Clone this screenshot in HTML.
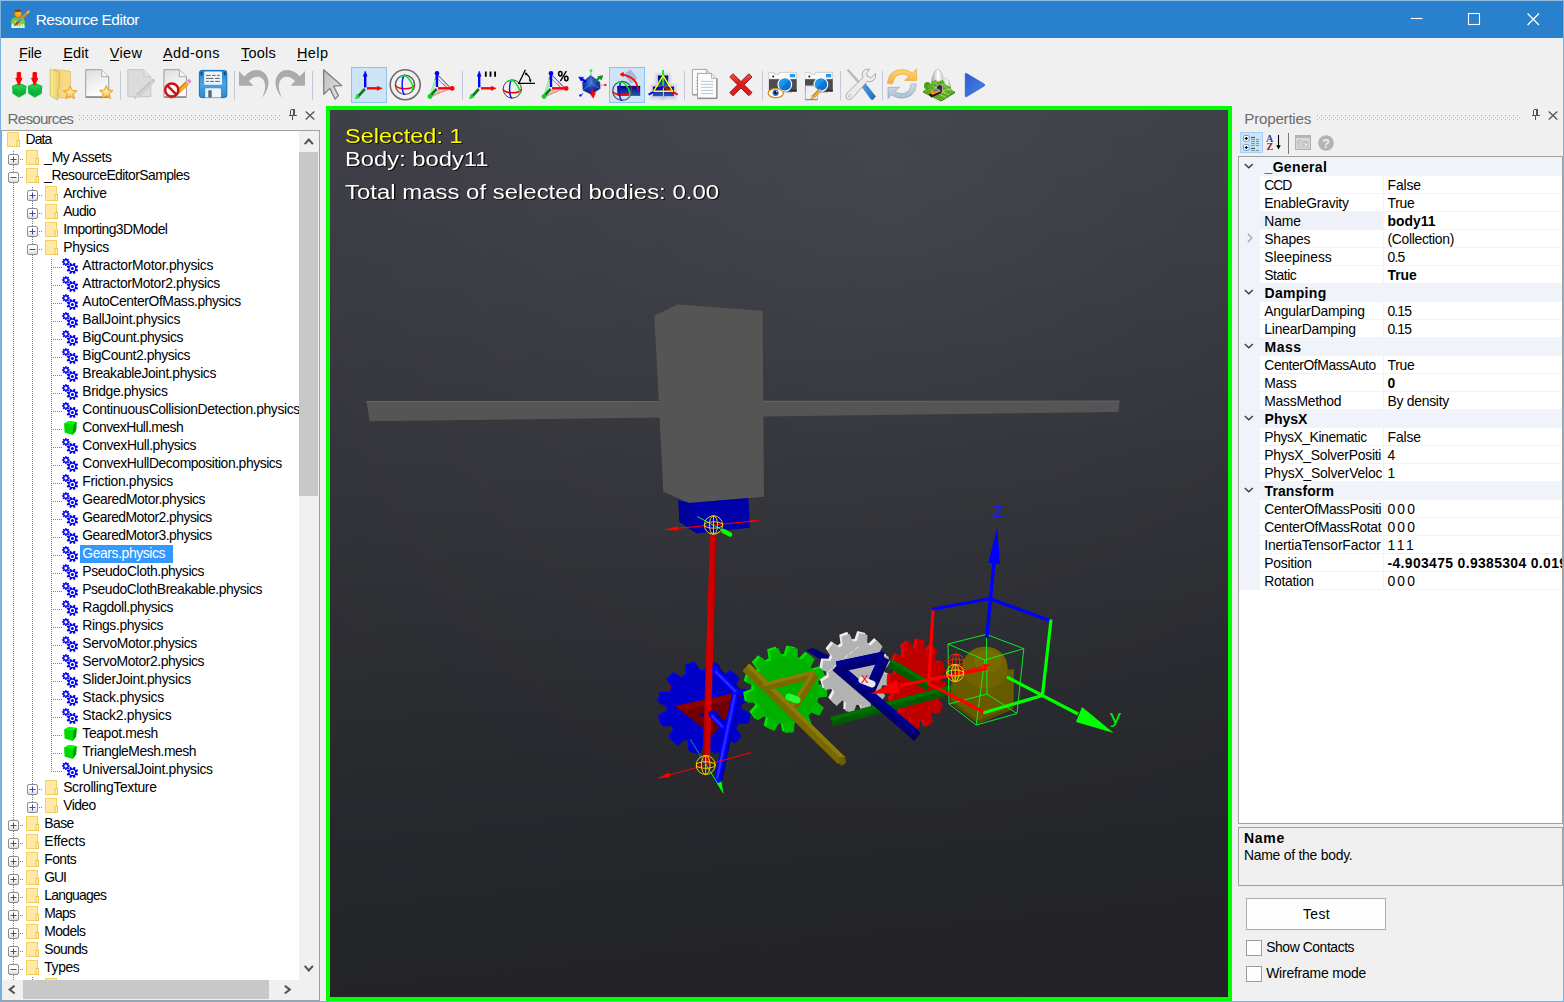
<!DOCTYPE html>
<html><head><meta charset="utf-8"><title>Resource Editor</title>
<style>
html,body{margin:0;padding:0}
body{width:1564px;height:1002px;overflow:hidden;position:relative;background:#f0f0f0;font-family:"Liberation Sans",sans-serif;}
.t{position:absolute;white-space:pre;line-height:1;font-family:"Liberation Sans",sans-serif;}
.a{position:absolute}
svg{position:absolute;overflow:visible}

</style></head>
<body>
<div class="a" style="left:0;top:0;width:1564px;height:1002px;box-sizing:border-box;border:1px solid #7db2de;border-top-color:#8fbde3"></div>
<div class="a" style="left:1px;top:1px;width:1562px;height:37px;background:#2981cd"></div>
<svg style="left:10px;top:8px" width="22" height="22" viewBox="0 0 22 22">
<defs><radialGradient id="hd" cx=".55" cy=".55" r=".6"><stop offset="0" stop-color="#ffc44a"/><stop offset=".6" stop-color="#f39a0c"/><stop offset="1" stop-color="#c66f00"/></radialGradient>
<linearGradient id="bd" x1="0" y1="0" x2="0" y2="1"><stop offset="0" stop-color="#6cc63a"/><stop offset=".55" stop-color="#7fd048"/><stop offset="1" stop-color="#e9f3e0"/></linearGradient></defs>
<path d="M1.2 20 L1.2 13.5 Q1.2 9.6 5 9.6 L11 9.6 Q14.8 9.6 14.8 13.5 L14.8 20 Z" fill="url(#bd)"/>
<path d="M2 20 V15.5 H3.3 V20 M5.2 20 V13 H6.6 V20 M11 20 V16.5 H12 V20 M13 20 V16 H14 V20" fill="#fff" opacity=".8"/>
<ellipse cx="8" cy="5.4" rx="3.9" ry="3.7" fill="url(#hd)"/>
<path d="M4.2 4.6 Q5 1.4 8.2 1.6 Q11.5 1.8 11.8 4.4 Q9.5 2.8 7.5 4 Q6 3 4.2 4.6Z" fill="#7a3e04"/>
<path d="M18.6 3.6 L10.6 11.2" stroke="#c99334" stroke-width="2.3" stroke-linecap="round"/>
<path d="M18.8 3.2 L17.2 4.8" stroke="#e8c47a" stroke-width="1.4" stroke-linecap="round"/>
<path d="M10.6 11.2 L7.6 14.4" stroke="#4f8fd6" stroke-width="2.4" stroke-linecap="butt"/>
<path d="M7.6 14.6 L5.6 16.6" stroke="#9a5a1e" stroke-width="2.4" stroke-linecap="round"/>
</svg>
<span class="t" style="left:35.7px;top:11px;line-height:17px;font-size:15.4px;color:#fff;letter-spacing:-0.475px;">Resource Editor</span>
<svg style="left:1400px;top:0" width="160" height="38" viewBox="0 0 160 38">
<path d="M10.8 18.5 H22.6" stroke="#fff" stroke-width="1.1" fill="none"/>
<rect x="68.5" y="13.5" width="11" height="11" stroke="#fff" stroke-width="1.1" fill="none"/>
<path d="M127.6 13.5 L139 25 M139 13.5 L127.6 25" stroke="#fff" stroke-width="1.2" fill="none"/>
</svg>
<span class="t" style="left:19px;top:45px;line-height:16px;font-size:14.5px;color:#000;letter-spacing:-0.191px;">File</span>
<div class="a" style="left:19px;top:60px;width:7.7px;height:1px;background:#000"></div>
<span class="t" style="left:63.2px;top:45px;line-height:16px;font-size:14.5px;color:#000;letter-spacing:0.154px;">Edit</span>
<div class="a" style="left:63.2px;top:60px;width:8.8px;height:1px;background:#000"></div>
<span class="t" style="left:109.7px;top:45px;line-height:16px;font-size:14.5px;color:#000;letter-spacing:0.358px;">View</span>
<div class="a" style="left:109.7px;top:60px;width:9.0px;height:1px;background:#000"></div>
<span class="t" style="left:162.9px;top:45px;line-height:16px;font-size:14.5px;color:#000;letter-spacing:0.442px;">Add-ons</span>
<div class="a" style="left:162.9px;top:60px;width:9.1px;height:1px;background:#000"></div>
<span class="t" style="left:241px;top:45px;line-height:16px;font-size:14.5px;color:#000;letter-spacing:0.230px;">Tools</span>
<div class="a" style="left:241px;top:60px;width:8.1px;height:1px;background:#000"></div>
<span class="t" style="left:296.9px;top:45px;line-height:16px;font-size:14.5px;color:#000;letter-spacing:0.445px;">Help</span>
<div class="a" style="left:296.9px;top:60px;width:9.9px;height:1px;background:#000"></div>
<div class="a" style="left:120px;top:71px;width:1px;height:29px;background:#c3c6dc"></div>
<div class="a" style="left:234px;top:71px;width:1px;height:29px;background:#c3c6dc"></div>
<div class="a" style="left:312px;top:71px;width:1px;height:29px;background:#c3c6dc"></div>
<div class="a" style="left:462px;top:71px;width:1px;height:29px;background:#c3c6dc"></div>
<div class="a" style="left:684px;top:71px;width:1px;height:29px;background:#c3c6dc"></div>
<div class="a" style="left:762px;top:71px;width:1px;height:29px;background:#c3c6dc"></div>
<div class="a" style="left:840px;top:71px;width:1px;height:29px;background:#c3c6dc"></div>
<div class="a" style="left:882px;top:71px;width:1px;height:29px;background:#c3c6dc"></div>
<div class="a" style="left:351px;top:67px;width:36px;height:36px;box-sizing:border-box;background:#cde4f7;border:1px solid #90c2ea"></div>
<div class="a" style="left:609px;top:67px;width:36px;height:36px;box-sizing:border-box;background:#cde4f7;border:1px solid #90c2ea"></div>
<svg style="left:0;top:64px" width="1000" height="42" viewBox="0 64 1000 42"><defs>
<linearGradient id="gcube" x1="0" y1="0" x2="0" y2="1"><stop offset="0" stop-color="#2bd65a"/><stop offset=".5" stop-color="#10b83c"/><stop offset="1" stop-color="#06a02c"/></linearGradient>
<linearGradient id="fold1" x1="0" y1="0" x2="1" y2="0"><stop offset="0" stop-color="#f9ec8c"/><stop offset="1" stop-color="#e9cf6c"/></linearGradient>
<linearGradient id="fold2" x1="0" y1="0" x2="1" y2="0"><stop offset="0" stop-color="#f6d27a"/><stop offset="1" stop-color="#fbdc8c"/></linearGradient>
<linearGradient id="page" x1="0" y1="0" x2=".4" y2="1"><stop offset="0" stop-color="#dcdee0"/><stop offset="1" stop-color="#fdfdfd"/></linearGradient>
<radialGradient id="star" cx=".5" cy=".45" r=".6"><stop offset="0" stop-color="#fff0b0"/><stop offset=".6" stop-color="#f9c850"/><stop offset="1" stop-color="#e89818"/></radialGradient>
<linearGradient id="flop" x1="0" y1="0" x2="0" y2="1"><stop offset="0" stop-color="#1f86d2"/><stop offset=".5" stop-color="#4aa4e4"/><stop offset="1" stop-color="#2a8ad4"/></linearGradient>
<linearGradient id="cur" x1="0" y1="0" x2="1" y2="1"><stop offset="0" stop-color="#bdbdbd"/><stop offset="1" stop-color="#e6e6e6"/></linearGradient>
<linearGradient id="navy" x1="0" y1="0" x2="0" y2="1"><stop offset="0" stop-color="#00007c"/><stop offset="1" stop-color="#2c58b8"/></linearGradient>
<radialGradient id="bcube" cx=".45" cy=".35" r=".7"><stop offset="0" stop-color="#4a78e0"/><stop offset=".5" stop-color="#1c3cb0"/><stop offset="1" stop-color="#0a1878"/></radialGradient>
<linearGradient id="redx" x1="0" y1="0" x2="0" y2="1"><stop offset="0" stop-color="#f05050"/><stop offset=".5" stop-color="#d81818"/><stop offset="1" stop-color="#e82020"/></linearGradient>
<linearGradient id="lens" x1="0" y1="0" x2="1" y2="1"><stop offset="0" stop-color="#22a6f4"/><stop offset="1" stop-color="#0a74d8"/></linearGradient>
<linearGradient id="ref1" x1="0" y1="0" x2="0" y2="1"><stop offset="0" stop-color="#fbd878"/><stop offset="1" stop-color="#f2b040"/></linearGradient>
<linearGradient id="ref2" x1="0" y1="0" x2="0" y2="1"><stop offset="0" stop-color="#d2dde8"/><stop offset="1" stop-color="#a8bcd2"/></linearGradient>
<linearGradient id="play" x1="0" y1="0" x2="1" y2="1"><stop offset="0" stop-color="#2a5ccc"/><stop offset="1" stop-color="#4c84ec"/></linearGradient>
<linearGradient id="hand" x1="0" y1="0" x2="1" y2="0"><stop offset="0" stop-color="#58a8e8"/><stop offset="1" stop-color="#1868b8"/></linearGradient>
<linearGradient id="mtn" x1="0" y1="0" x2="1" y2="0"><stop offset="0" stop-color="#a8a8a8"/><stop offset=".35" stop-color="#ffffff"/><stop offset=".6" stop-color="#d0d0d0"/><stop offset=".8" stop-color="#f6f6f6"/><stop offset="1" stop-color="#b4b4b4"/></linearGradient>
<filter id="bl" x="-30%" y="-30%" width="160%" height="160%"><feGaussianBlur stdDeviation="1.2"/></filter>
</defs>
<path d="M12.8 86.4 L19.2 83.7 L25.8 86.4 L25.3 93.2 L18.9 96.9 L13.1 93.2 Z" fill="url(#gcube)" stroke="#14b844" stroke-width="1.4" stroke-linejoin="round"/>
<path d="M12.3 86.2 L19.1 88.6 L26.200000000000003 86.2 M19.1 88.6 L18.9 97.5" stroke="#28d858" stroke-width=".8" fill="none" opacity=".7"/>
<path d="M17.2 72.6 h3.4 v5.6 h1.4 l-3.1 7 l-3.1 -7 h1.4 z" fill="#ff0000" stroke="#ff0000" stroke-width="1" stroke-linejoin="round"/>
<path d="M28.6 86.4 L35.0 83.7 L41.6 86.4 L41.1 93.2 L34.7 96.9 L28.900000000000002 93.2 Z" fill="url(#gcube)" stroke="#14b844" stroke-width="1.4" stroke-linejoin="round"/>
<path d="M28.1 86.2 L34.900000000000006 88.6 L42.0 86.2 M34.900000000000006 88.6 L34.7 97.5" stroke="#28d858" stroke-width=".8" fill="none" opacity=".7"/>
<path d="M33.0 72.6 h3.4 v5.6 h1.4 l-3.1 7 l-3.1 -7 h1.4 z" fill="#ff0000" stroke="#ff0000" stroke-width="1" stroke-linejoin="round"/>
<path d="M54 69.4 L70.4 71.3 L70.4 97.8 L58.6 97.8 Z" fill="url(#fold2)" stroke="#d8b45c" stroke-width=".7"/>
<path d="M50.2 69.4 L59.4 72 L59.2 88 L57.8 89.5 L57.6 100.2 L50.2 95.6 Z" fill="url(#fold1)" stroke="#cfb050" stroke-width=".7" stroke-linejoin="round"/>
<polygon points="70.20,85.80 72.14,90.33 77.05,90.78 73.34,94.02 74.43,98.82 70.20,96.30 65.97,98.82 67.06,94.02 63.35,90.78 68.26,90.33" fill="url(#star)" stroke="#e8a020" stroke-width=".9" stroke-linejoin="round"/>
<path d="M85.7 69.7 H101.7 L108.7 76.7 V96.7 H85.7 Z" fill="url(#page)" stroke="#9a9c9e" stroke-width="1" stroke-linejoin="round"/>
<path d="M101.7 69.7 V76.7 H108.7" fill="#f4f4f4" stroke="#9a9c9e" stroke-width="0.8" stroke-linejoin="round"/>
<path d="M85.7 97.3 H108.7" stroke="#8c8e90" stroke-width="1.4"/>
<polygon points="106.20,85.40 108.14,89.93 113.05,90.38 109.34,93.62 110.43,98.42 106.20,95.90 101.97,98.42 103.06,93.62 99.35,90.38 104.26,89.93" fill="url(#star)" stroke="#e8a020" stroke-width=".9" stroke-linejoin="round"/>
<path d="M127.8 69.7 H143.8 L150.8 76.7 V96.7 H127.8 Z" fill="#dcdcdc" stroke="#c6c6c6" stroke-width="1" stroke-linejoin="round"/>
<path d="M143.8 69.7 V76.7 H150.8" fill="#e2e2e2" stroke="#c6c6c6" stroke-width="0.8" stroke-linejoin="round"/>
<g transform="translate(154.4 79.6) rotate(136.5)"><path d="M4.74 -1.8 H22.30 V1.8 H4.74Z" fill="#d2d2d2" stroke="#bcbcbc" stroke-width=".5"/><path d="M4.74 0.36 H22.30 V1.8 H4.74Z" fill="#c2c2c2"/><path d="M22.30 -1.8 L27.87 0 L22.30 1.8Z" fill="#d8d8d8" stroke="#bcbcbc" stroke-width=".4"/><path d="M25.92 -0.63 L27.87 0 L25.92 0.63Z" fill="#b0b0b0"/><rect x="2.51" y="-1.8" width="2.23" height="3.6" fill="#d0d0d0"/><path d="M2.51 -1.8 H1.08 Q0 -1.8 0 0 Q0 1.8 1.08 1.8 H2.51Z" fill="#c4c4c4"/></g>
<path d="M163.9 69.7 H179.4 L186.4 76.7 V96.7 H163.9 Z" fill="url(#page)" stroke="#9a9c9e" stroke-width="1" stroke-linejoin="round"/>
<path d="M179.4 69.7 V76.7 H186.4" fill="#f4f4f4" stroke="#9a9c9e" stroke-width="0.8" stroke-linejoin="round"/>
<path d="M163.9 97.3 H186.4" stroke="#8c8e90" stroke-width="1.4"/>
<g transform="translate(190.4 80) rotate(136.8)"><path d="M4.62 -2.0 H21.73 V2.0 H4.62Z" fill="#fbb21e" stroke="#b87010" stroke-width=".5"/><path d="M4.62 0.40 H21.73 V2.0 H4.62Z" fill="#e08a0c"/><path d="M21.73 -2.0 L27.17 0 L21.73 2.0Z" fill="#f0d8a8" stroke="#b87010" stroke-width=".4"/><path d="M25.26 -0.70 L27.17 0 L25.26 0.70Z" fill="#5a4a3a"/><rect x="2.44" y="-2.0" width="2.17" height="4" fill="#c8c8cc"/><path d="M2.44 -2.0 H1.20 Q0 -2.0 0 0 Q0 2.0 1.20 2.0 H2.44Z" fill="#e27fd2"/></g>
<circle cx="171.8" cy="90" r="6.6" fill="#fff" fill-opacity=".75" stroke="#cc1414" stroke-width="2.5"/>
<path d="M167.4 85.6 L176.2 94.4" stroke="#cc1414" stroke-width="2.5"/>
<rect x="199.4" y="70.4" width="27.4" height="27.2" rx="2.4" fill="url(#flop)" stroke="#0f70bc" stroke-width="1"/>
<rect x="204.2" y="71.6" width="17.8" height="13.2" rx="1" fill="#eef6fc"/>
<path d="M206 75.4 h4.6 m1.4 0 h3.6 m1.4 0 h2.8 M206 78.4 h7.6 m1.4 0 h4.8 M206 81.4 h2.8 m1.2 0 h3.8 m1.4 0 h4.6" stroke="#3c3c3c" stroke-width=".8"/>
<path d="M205.2 97.6 V89.4 Q205.2 88.2 206.4 88.2 H219.8 Q221 88.2 221 89.4 V97.6 Z" fill="#f0f4fa"/>
<rect x="208.3" y="90.2" width="3.4" height="7.2" rx=".6" fill="#5a6470"/>
<rect x="200.6" y="72" width="1.8" height="3.4" fill="#0c4c8c"/><rect x="223.8" y="72" width="1.8" height="3.4" fill="#0c4c8c"/>
<path d="M239 71 L239 85.8 L253.6 85.8 L248.8 81 C252.5 77.5 257 75 261.5 78 C266 81.5 266.5 88 262.2 97.8 C270 88 270.5 78.5 264 72.5 C258 67.5 249 70.5 244.4 76.4 Z" fill="#ababab"/>
<path d="M 305 71 L 305 85.8 L 290.4 85.8 L 295.2 81 C 291.5 77.5 287 75 282.5 78 C 278 81.5 277.5 88 281.8 97.8 C 274 88 273.5 78.5 280 72.5 C 286 67.5 295 70.5 299.6 76.4 Z" fill="#ababab"/>
<path d="M323.6 69.8 L341.6 85.6 L333.6 86.2 L338.4 95.6 L335 99 L329.8 88.4 L323.8 94.2 Z" fill="url(#cur)" stroke="#7e7e80" stroke-width="1.3" stroke-linejoin="round"/>
<path d="M365.2 87.4 V75" stroke="#0000ff" stroke-width="2.4"/><path d="M363.3 76.2 L365.2 71.2 L367.09999999999997 76.2Z" fill="#0000ff" stroke="#0000ff" stroke-width=".6" stroke-linejoin="round"/>
<path d="M367.0 88.3 H378.2" stroke="#ff0000" stroke-width="2.4"/><path d="M377.2 86.2 L382.2 88.3 L377.2 90.4Z" fill="#ff0000" stroke="#ff0000" stroke-width=".5" stroke-linejoin="round"/>
<path d="M364.8 89 L358.59999999999997 95.8" stroke="#067a1c" stroke-width="2.6"/><path d="M357.0 94 L360.2 97.2 L355.4 99Z" fill="#14d82c" stroke="#14d82c" stroke-width=".5" stroke-linejoin="round"/>
<circle cx="405.2" cy="84.8" r="15" fill="none" stroke="#6c6c6c" stroke-width="1.6"/>
<circle cx="405" cy="84.8" r="9.6" fill="none" stroke="#5a5a5a" stroke-width="1.3"/>
<path d="M395.4 84.8 A9.6 4.03 0 0 0 414.6 84.8" fill="none" stroke="#ff0000" stroke-width="1.5"/>
<path d="M405 75.2 A2.88 9.6 0 0 0 405 94.39999999999999" fill="none" stroke="#1010ff" stroke-width="1.4"/>
<path d="M399.72 77.12 Q405.96 72.80 410.95 81.92 Q414.12 87.68 411.91 90.75" fill="none" stroke="#10e028" stroke-width="1.5"/>
<g stroke-width=".6" fill="none"><path d="M437 74 L451 88 M438.5 76 L449 86.6 M437.8 79 L446 87" stroke="#3030ff"/><path d="M445 82.4 L450.6 88 M443 83.4 L447 87.4" stroke="#ff3030"/><path d="M430.5 96 L450 89 M432 96.4 L445 90 M433 93 L441 89.6" stroke="#ff5050"/><path d="M430 95 L436 76 M432 93 L436.4 80 M433 96 L440 91" stroke="#30e840"/><path d="M435 80 L436.4 75" stroke="#3030ff"/></g>
<path d="M437 87 V74" stroke="#0000ff" stroke-width="2.4"/><circle cx="437" cy="73.3" r="2.3" fill="#0000ff"/>
<path d="M438 88.3 H451" stroke="#ff0000" stroke-width="2.4"/><circle cx="452.2" cy="88.4" r="2.3" fill="#ff0000"/>
<path d="M436.6 88.8 L431 95.2" stroke="#067a1c" stroke-width="2.6"/><circle cx="430" cy="96.5" r="2.4" fill="#10d028"/>
<path d="M479.2 87.4 V75" stroke="#0000ff" stroke-width="2.4"/><path d="M477.3 76.2 L479.2 71.2 L481.09999999999997 76.2Z" fill="#0000ff" stroke="#0000ff" stroke-width=".6" stroke-linejoin="round"/>
<path d="M481.0 88.3 H492.2" stroke="#ff0000" stroke-width="2.4"/><path d="M491.2 86.2 L496.2 88.3 L491.2 90.4Z" fill="#ff0000" stroke="#ff0000" stroke-width=".5" stroke-linejoin="round"/>
<path d="M478.8 89 L472.59999999999997 95.8" stroke="#067a1c" stroke-width="2.6"/><path d="M471.0 94 L474.2 97.2 L469.4 99Z" fill="#14d82c" stroke="#14d82c" stroke-width=".5" stroke-linejoin="round"/>
<path d="M485.8 71.4 V76.8 M490.5 71.4 V76.8 M495.1 71.4 V76.8" stroke="#000" stroke-width="1.8"/>
<circle cx="512.3" cy="89" r="9.1" fill="none" stroke="#444" stroke-width="1"/>
<path d="M503.19999999999993 89 A9.1 3.82 0 0 0 521.4 89" fill="none" stroke="#ff0000" stroke-width="1.5"/>
<path d="M512.3 79.9 A2.73 9.1 0 0 0 512.3 98.1" fill="none" stroke="#1010ff" stroke-width="1.4"/>
<path d="M507.29 81.72 Q513.21 77.62 517.94 86.27 Q520.94 91.73 518.85 94.64" fill="none" stroke="#10e028" stroke-width="1.5"/>
<path d="M525.4 69.8 L518.8 83.3 H535" fill="none" stroke="#000" stroke-width="1.3"/>
<path d="M525.6 73.8 Q530.2 76 530.2 81" fill="none" stroke="#000" stroke-width="1.1"/><path d="M524.4 72.4 L527.6 73 L526 75.8Z M528.8 79.6 L531.6 79.4 L530.4 82.8Z" fill="#000"/>
<g stroke-width=".6" fill="none"><path d="M551 74 L565 88 M552.5 76 L563 86.6 M551.8 79 L560 87" stroke="#3030ff"/><path d="M559 82.4 L564.6 88 M557 83.4 L561 87.4" stroke="#ff3030"/><path d="M544.5 96 L564 89 M546 96.4 L559 90 M547 93 L555 89.6" stroke="#ff5050"/><path d="M544 95 L550 76 M546 93 L550.4 80 M547 96 L554 91" stroke="#30e840"/><path d="M549 80 L550.4 75" stroke="#3030ff"/></g>
<path d="M551 87 V74" stroke="#0000ff" stroke-width="2.4"/><circle cx="551" cy="73.3" r="2.3" fill="#0000ff"/>
<path d="M552 88.3 H565" stroke="#ff0000" stroke-width="2.4"/><circle cx="566.2" cy="88.4" r="2.3" fill="#ff0000"/>
<path d="M550.6 88.8 L545 95.2" stroke="#067a1c" stroke-width="2.6"/><circle cx="544" cy="96.5" r="2.4" fill="#10d028"/>
<g fill="none" stroke="#000"><ellipse cx="560.3" cy="73.7" rx="1.7" ry="2.2" stroke-width="1.5"/><ellipse cx="566.3" cy="78.5" rx="1.7" ry="2.2" stroke-width="1.5"/><path d="M566.4 71 L560.4 81.2" stroke-width="1.4"/></g>
<path d="M591 69.6 V76" stroke="#90f0a0" stroke-width="1.8"/><circle cx="591" cy="70.6" r="1.4" fill="#30f050"/>
<path d="M600.6 85 H605" stroke="#ff9090" stroke-width="1.6" stroke-dasharray="1.4 .8"/><circle cx="605.4" cy="85" r="1.3" fill="#ff2020"/>
<path d="M583 93.6 L580.6 95.6" stroke="#2020ff" stroke-width="1"/><circle cx="580.4" cy="95.4" r="1.2" fill="#1010ff"/>
<path d="M590.6 75.6 L599.6 82 L600.2 88.6 L591.2 94.2 L583 90.2 L582.6 82 Z" fill="url(#bcube)" stroke="#0c1c80" stroke-width=".5" stroke-linejoin="round"/>
<path d="M590.8 76 L591.4 83.6 L600 88.4 M591.4 83.6 L583 89.8" stroke="#5a8af0" stroke-width=".9" fill="none" opacity=".8"/>
<path d="M586.4 82 L581.6 79" stroke="#0000ff" stroke-width="2.2"/><path d="M578.6 77 L583.6 77.4 L581.2 81.2Z" fill="#0000ff" stroke="#0000ff" stroke-width=".5"/>
<path d="M595.4 81.4 L599.4 77.8" stroke="#068a20" stroke-width="2.2"/><path d="M602.8 75.6 L601.4 80 L597.6 76.6Z" fill="#068a20" stroke="#068a20" stroke-width=".5"/>
<path d="M592 89.4 L592.6 94" stroke="#ff0000" stroke-width="2.2"/><path d="M590 93.4 L595.6 92.8 L593.2 98.2Z" fill="#ff0000" stroke="#ff0000" stroke-width=".5"/>
<rect x="-5.8" y="-4.2" width="11.6" height="8.4" transform="translate(630.6 76.3) rotate(52)" fill="#a4b0d0" opacity=".9"/>
<rect x="617.2" y="85.9" width="23" height="10" fill="url(#navy)"/>
<path d="M637.9 90.2 Q637.6 77.4 622.4 74.6" fill="none" stroke="#ff0000" stroke-width="1.6"/><path d="M620 74.3 L623.4 72.4 L623.2 76.6Z" fill="#ff0000" stroke="#ff0000" stroke-width=".7" stroke-linejoin="round"/>
<circle cx="622.2" cy="90.9" r="9.5" fill="none" stroke="#4a4a4a" stroke-width="1.1"/>
<path d="M612.7 90.9 A9.5 3.99 0 0 0 631.7 90.9" fill="none" stroke="#ff0000" stroke-width="1.5"/>
<path d="M622.2 81.4 A2.85 9.5 0 0 0 622.2 100.4" fill="none" stroke="#1010ff" stroke-width="1.4"/>
<path d="M616.98 83.30 Q623.15 79.03 628.09 88.05 Q631.23 93.75 629.04 96.79" fill="none" stroke="#10e028" stroke-width="1.5"/>
<rect x="655.3" y="73.3" width="15.5" height="16.200000000000003" fill="#a4acd4" opacity=".42" filter="url(#bl)"/>
<rect x="650.3" y="84.39999999999999" width="15.2" height="15.0" fill="#a4acd4" opacity=".42" filter="url(#bl)"/>
<rect x="661.4" y="84.39999999999999" width="15.2" height="15.0" fill="#a4acd4" opacity=".42" filter="url(#bl)"/>
<rect x="657.9" y="75.5" width="10.3" height="10.8" fill="url(#navy)"/>
<rect x="652.9" y="86.6" width="10" height="9.6" fill="url(#navy)"/>
<rect x="664" y="86.6" width="10" height="9.6" fill="url(#navy)"/>
<path d="M663.1 86.5 V70" stroke="#10e820" stroke-width="2"/><path d="M663.1 86.5 L648.6 94.6" stroke="#0000ff" stroke-width="2"/><path d="M663.1 86.5 L677.6 94.6" stroke="#ff0000" stroke-width="2"/>
<path d="M663.1 75.7 L653.8 91.2 H672.6 Z" fill="none" stroke="#ffff00" stroke-width="1.4" stroke-linejoin="round"/>
<path d="M692.4 69.4 H706.4 L711.4 74.4 V94.4 H692.4 Z" fill="#fbfbfb" stroke="#9c9c9c" stroke-width=".9" stroke-linejoin="round"/><path d="M706.4 69.4 V74.4 H711.4" fill="#e8e8e8" stroke="#9c9c9c" stroke-width=".7"/>
<path d="M692.4 95.0 H712.0 V74.4" fill="none" stroke="#8a8a8a" stroke-width="1"/>
<path d="M695.6 77.4 h3 M695.6 80.4 h3 M695.6 83.4 h3 M695.6 86.4 h3 M695.6 89.4 h3" stroke="#a8bcd4" stroke-width=".8"/>
<path d="M697.5 73.4 H711.5 L716.5 78.4 V98.0 H697.5 Z" fill="#fbfbfb" stroke="#9c9c9c" stroke-width=".9" stroke-linejoin="round"/><path d="M711.5 73.4 V78.4 H716.5" fill="#e8e8e8" stroke="#9c9c9c" stroke-width=".7"/>
<path d="M697.5 98.6 H717.1 V78.4" fill="none" stroke="#8a8a8a" stroke-width="1"/>
<path d="M701 81.4 h12 M701 84.4 h12 M701 87.4 h12 M701 90.5 h12 M701 93.5 h12" stroke="#a8bcd4" stroke-width=".8"/>
<path d="M733 73.8 L741 81.6 L748.8 73.8 L752 77 L744.2 84.8 L752 92.6 L748.8 95.8 L741 88 L733 95.8 L729.8 92.6 L737.6 84.8 L729.8 77 Z" fill="url(#redx)" stroke="#8c1010" stroke-width=".9" stroke-linejoin="round"/>
<path d="M768.9 72.2 H773.6999999999999 L774.5 74.2 H778.9 L779.6999999999999 72.2 H796.6999999999999 V91.6 H768.9 Z" fill="#4c4c50"/>
<path d="M768.9 72.2 H773.6999999999999 L774.5 74.2 H778.9 L779.6999999999999 72.2 H796.6999999999999 V79 H768.9 Z" fill="#fafafa" stroke="#d0c8b8" stroke-width=".4"/>
<rect x="768.9" y="89.8" width="27.8" height="1.8" fill="#2e2e30"/><path d="M772.9 92.6 H791.9" stroke="#c4c4c4" stroke-width="1"/>
<circle cx="773.1999999999999" cy="76.5" r="1" fill="#222"/><rect x="789.9" y="74" width="5.2" height="3.3" fill="#1e9bf0"/>
<circle cx="784.8" cy="84.4" r="7.4" fill="#fff"/><circle cx="784.8" cy="84.4" r="6.2" fill="url(#lens)"/><path d="M780.4 88.8 A6.2 6.2 0 0 0 789.1999999999999 80 Z" fill="#0a64c8" opacity=".5"/>
<ellipse cx="775.8" cy="93.2" rx="7.6" ry="4.5" fill="#fff" stroke="#d8900c" stroke-width="1.3"/><circle cx="775.6" cy="92.8" r="3.1" fill="#2a6cc0"/><circle cx="775.8" cy="92.6" r="1.7" fill="#111"/><circle cx="776.8" cy="91.8" r=".7" fill="#fff"/>
<path d="M805 72.2 H809.8 L810.6 74.2 H815 L815.8 72.2 H832.8 V91.6 H805 Z" fill="#4c4c50"/>
<path d="M805 72.2 H809.8 L810.6 74.2 H815 L815.8 72.2 H832.8 V79 H805 Z" fill="#fafafa" stroke="#d0c8b8" stroke-width=".4"/>
<rect x="805" y="89.8" width="27.8" height="1.8" fill="#2e2e30"/><path d="M809 92.6 H828" stroke="#c4c4c4" stroke-width="1"/>
<circle cx="809.3" cy="76.5" r="1" fill="#222"/><rect x="826" y="74" width="5.2" height="3.3" fill="#1e9bf0"/>
<circle cx="820.9" cy="84.4" r="7.4" fill="#fff"/><circle cx="820.9" cy="84.4" r="6.2" fill="url(#lens)"/><path d="M816.5 88.8 A6.2 6.2 0 0 0 825.3 80 Z" fill="#0a64c8" opacity=".5"/>
<path d="M805.4 85.8 H814 L817.4 89.2 V99.6 H805.4 Z" fill="#f0f0f0" stroke="#a8a8a8" stroke-width=".8"/><path d="M805.4 99.6 H817.4" stroke="#8c8c8c" stroke-width="1.2"/>
<g transform="translate(820.8 89.4) rotate(135.6)"><path d="M2.28 -1.5 H10.75 V1.5 H2.28Z" fill="#fbb21e" stroke="#b87010" stroke-width=".5"/><path d="M2.28 0.30 H10.75 V1.5 H2.28Z" fill="#e08a0c"/><path d="M10.75 -1.5 L13.44 0 L10.75 1.5Z" fill="#f0d8a8" stroke="#b87010" stroke-width=".4"/><path d="M12.50 -0.52 L13.44 0 L12.50 0.52Z" fill="#5a4a3a"/><rect x="1.21" y="-1.5" width="1.07" height="3" fill="#c8c8cc"/><path d="M1.21 -1.5 H0.90 Q0 -1.5 0 0 Q0 1.5 0.90 1.5 H1.21Z" fill="#e27fd2"/></g>
<path d="M847.4 70.4 L848.6 69.6 L861 83.6 L859.6 84.8 Z" fill="#c8c8c8" stroke="#909090" stroke-width=".6"/>
<path d="M860.4 84.6 L864 82 L875.6 96.4 L873 99.6 Q871.6 100 870.8 99 Z" fill="url(#hand)" stroke="#1c68b0" stroke-width=".5"/>
<path d="M869.6 69.2 Q864.4 68.4 862.6 72.6 Q861.8 75.4 863 77.6 L846.6 93.6 Q844.6 96.8 847.2 99 Q849.8 100.6 852.4 98.2 L867.2 81.4 Q870.6 82.6 873.6 80.4 Q876.4 77.8 875.6 73.6 L871.2 77.6 L867.4 76.4 L866.6 72.8 Z" fill="#ececec" stroke="#9a9a9a" stroke-width=".8" stroke-linejoin="round"/>
<circle cx="849.6" cy="95.8" r="1.3" fill="#fff" stroke="#9a9a9a" stroke-width=".6"/>
<path d="M887.4 83.6 Q888.4 70 902 69.6 Q908 69.6 912.2 73 L916.6 69 L916.6 80.4 L904.6 80.4 L909 76.4 Q905.4 73.8 901.6 74.2 Q893.6 75 892.6 83.8 Z" fill="url(#ref1)" stroke="#e8a838" stroke-width=".7" stroke-linejoin="round"/>
<path d="M916.4 84 Q915.4 97.6 901.8 98.2 Q895.8 98.2 891.6 94.8 L888 98.6 L888 87.4 L899.6 87.4 L895 91.4 Q898.4 93.8 902.2 93.6 Q910.2 92.8 911.2 84 Z" fill="url(#ref2)" stroke="#94a8c0" stroke-width=".7" stroke-linejoin="round"/>
<path d="M923 91 L936.6 83 L955 91.6 L941 100.4 Z" fill="#5aac1c"/><path d="M923 91 L941 100.4 L941 101.6 L923 92.4Z" fill="#3c8410"/><path d="M941 100.4 L955 91.6 L955 93 L941 101.6Z" fill="#2e6c0c"/>
<path d="M931 83.4 Q933 70.6 937.6 69 Q941.4 70.4 943.4 78.2 Q946.4 77.2 948.6 80.6 Q950.6 84.6 951.6 90 L943 94 L932 88 Z" fill="#5aac1c"/>
<path d="M931.4 81 Q933.6 70.4 937.6 69 Q941.2 70.4 943.2 78 Q946 76.8 948.4 80.2 Q950.2 83.6 950.8 87 L946 85 L942.6 79.6 Q939 82.6 935.6 80 Q933.4 81.6 931.4 81Z" fill="url(#mtn)" stroke="#b4b4b4" stroke-width=".4"/>
<path d="M932 84 L943 79 M934 88.6 L949 82 M937 92 L952 88.6 M936 83.6 L945 94 M944 85.6 L951 91.4 M928 88.4 L945.8 97.4 M932.4 86 L949.6 95" stroke="#d8f0b0" stroke-width=".7" opacity=".8"/>
<ellipse cx="927.4" cy="85.8" rx="3.4" ry="3.8" fill="#4ca018"/><ellipse cx="930.4" cy="86.8" rx="2.4" ry="2.8" fill="#58b020"/>
<path d="M936.6 91.4 V86.4 Q939.4 83.2 942.4 85.4 V92.6 Z" fill="#2a2a2a" stroke="#b8b8b8" stroke-width=".9"/>
<path d="M928.6 94.4 L939.6 90 L941.4 93 L931.4 97.6 Z" fill="#161616"/>
<path d="M930.4 92.4 Q931 90 934 89.2 Q937.6 88 939.8 89.4 L940.6 91.4 L932.2 95 Z" fill="#f8901c"/><path d="M933.4 90.2 L937.8 89 L938.4 90.4 L934 91.8Z" fill="#4a7ab8"/>
<path d="M965.2 74.4 Q965.2 72.6 966.8 73.6 L984.2 84 Q985.6 85 984.2 86 L966.8 96.6 Q965.2 97.6 965.2 95.8 Z" fill="url(#play)" stroke="#2a58c8" stroke-width=".6"/></svg>
<span class="t" style="left:7.6px;top:110px;line-height:17px;font-size:15.2px;color:#6d6d6d;letter-spacing:-0.784px;">Resources</span>
<svg style="left:79px;top:115px" width="201" height="6"><defs><pattern id="gp79" width="4" height="4" patternUnits="userSpaceOnUse"><rect x="0" y="0" width="1" height="1" fill="#b4b4b4"/><rect x="2" y="2" width="1" height="1" fill="#b4b4b4"/></pattern></defs><rect width="201" height="5" fill="url(#gp79)"/></svg>
<svg style="left:288px;top:109px" width="9" height="12" viewBox="0 0 9 12"><path d="M2.5 0.5 H6.5 M2.5 0.5 V6.5 M5.5 0.5 V6.5 M6.5 0.5 V6.5 M0.5 6.5 H8.5 M4.5 6.5 V11" stroke="#555" stroke-width="1" fill="none" shape-rendering="crispEdges"/></svg>
<svg style="left:305px;top:111px" width="10" height="9" viewBox="0 0 10 9"><path d="M0.7 0.5 L9.3 8.5 M9.3 0.5 L0.7 8.5" stroke="#555" stroke-width="1.3" fill="none"/></svg>
<div class="a" style="left:1px;top:130px;width:319px;height:871px;box-sizing:border-box;border:1px solid #a0a0a0;background:#fff"></div>
<div class="a" style="left:2px;top:131px;width:297px;height:849px;overflow:hidden">
<svg style="left:0;top:0" width="297" height="860"><g stroke="#808080" stroke-width="1" stroke-dasharray="1 1" shape-rendering="crispEdges"><line x1="11.5" y1="20" x2="11.5" y2="854"/><line x1="30.5" y1="56" x2="30.5" y2="677"/><line x1="30.5" y1="846" x2="30.5" y2="854"/><line x1="49.5" y1="128" x2="49.5" y2="641"/><line x1="18" y1="28.5" x2="22" y2="28.5"/><line x1="18" y1="46.5" x2="22" y2="46.5"/><line x1="37" y1="64.5" x2="41" y2="64.5"/><line x1="37" y1="82.5" x2="41" y2="82.5"/><line x1="37" y1="100.5" x2="41" y2="100.5"/><line x1="37" y1="118.5" x2="41" y2="118.5"/><line x1="51" y1="136.5" x2="60" y2="136.5"/><line x1="51" y1="154.5" x2="60" y2="154.5"/><line x1="51" y1="172.5" x2="60" y2="172.5"/><line x1="51" y1="190.5" x2="60" y2="190.5"/><line x1="51" y1="208.5" x2="60" y2="208.5"/><line x1="51" y1="226.5" x2="60" y2="226.5"/><line x1="51" y1="244.5" x2="60" y2="244.5"/><line x1="51" y1="262.5" x2="60" y2="262.5"/><line x1="51" y1="280.5" x2="60" y2="280.5"/><line x1="51" y1="298.5" x2="60" y2="298.5"/><line x1="51" y1="316.5" x2="60" y2="316.5"/><line x1="51" y1="334.5" x2="60" y2="334.5"/><line x1="51" y1="352.5" x2="60" y2="352.5"/><line x1="51" y1="370.5" x2="60" y2="370.5"/><line x1="51" y1="388.5" x2="60" y2="388.5"/><line x1="51" y1="406.5" x2="60" y2="406.5"/><line x1="51" y1="424.5" x2="60" y2="424.5"/><line x1="51" y1="442.5" x2="60" y2="442.5"/><line x1="51" y1="460.5" x2="60" y2="460.5"/><line x1="51" y1="478.5" x2="60" y2="478.5"/><line x1="51" y1="496.5" x2="60" y2="496.5"/><line x1="51" y1="514.5" x2="60" y2="514.5"/><line x1="51" y1="532.5" x2="60" y2="532.5"/><line x1="51" y1="550.5" x2="60" y2="550.5"/><line x1="51" y1="568.5" x2="60" y2="568.5"/><line x1="51" y1="586.5" x2="60" y2="586.5"/><line x1="51" y1="604.5" x2="60" y2="604.5"/><line x1="51" y1="622.5" x2="60" y2="622.5"/><line x1="51" y1="640.5" x2="60" y2="640.5"/><line x1="37" y1="658.5" x2="41" y2="658.5"/><line x1="37" y1="676.5" x2="41" y2="676.5"/><line x1="18" y1="694.5" x2="22" y2="694.5"/><line x1="18" y1="712.5" x2="22" y2="712.5"/><line x1="18" y1="730.5" x2="22" y2="730.5"/><line x1="18" y1="748.5" x2="22" y2="748.5"/><line x1="18" y1="766.5" x2="22" y2="766.5"/><line x1="18" y1="784.5" x2="22" y2="784.5"/><line x1="18" y1="802.5" x2="22" y2="802.5"/><line x1="18" y1="820.5" x2="22" y2="820.5"/><line x1="18" y1="838.5" x2="22" y2="838.5"/></g></svg>
<svg style="left:5px;top:1px" width="13" height="15" viewBox="0 0 13 15"><rect x=".5" y=".5" width="11" height="14" fill="#ffe9a6" stroke="#f4cf63"/><rect x="10" y="8.5" width="2.5" height="6" fill="#fff1c4" stroke="#f0c54e"/></svg>
<span class="t" style="left:23.6px;top:0px;line-height:16px;font-size:13.9px;color:#000;letter-spacing:-0.865px;">Data</span>
<svg style="left:6px;top:23px" width="11" height="11" viewBox="0 0 11 11"><defs><linearGradient id="eg" x1="0" y1="0" x2="0" y2="1"><stop offset=".45" stop-color="#fff"/><stop offset="1" stop-color="#d8d8d8"/></linearGradient></defs><rect x=".5" y=".5" width="10" height="10" rx="1.5" fill="url(#eg)" stroke="#8e8e8e"/><path d="M2.5 5.5 H8.5" stroke="#3a4e9c" stroke-width="1"/><path d="M5.5 2.5 V8.5" stroke="#3a4e9c" stroke-width="1"/></svg>
<svg style="left:24px;top:19px" width="13" height="15" viewBox="0 0 13 15"><rect x=".5" y=".5" width="11" height="14" fill="#ffe9a6" stroke="#f4cf63"/><rect x="10" y="8.5" width="2.5" height="6" fill="#fff1c4" stroke="#f0c54e"/></svg>
<span class="t" style="left:42.3px;top:18px;line-height:16px;font-size:13.9px;color:#000;letter-spacing:-0.367px;">_My Assets</span>
<svg style="left:6px;top:41px" width="11" height="11" viewBox="0 0 11 11"><defs><linearGradient id="eg" x1="0" y1="0" x2="0" y2="1"><stop offset=".45" stop-color="#fff"/><stop offset="1" stop-color="#d8d8d8"/></linearGradient></defs><rect x=".5" y=".5" width="10" height="10" rx="1.5" fill="url(#eg)" stroke="#8e8e8e"/><path d="M2.5 5.5 H8.5" stroke="#3a4e9c" stroke-width="1"/></svg>
<svg style="left:24px;top:37px" width="13" height="15" viewBox="0 0 13 15"><rect x=".5" y=".5" width="11" height="14" fill="#ffe9a6" stroke="#f4cf63"/><rect x="10" y="8.5" width="2.5" height="6" fill="#fff1c4" stroke="#f0c54e"/></svg>
<span class="t" style="left:42.3px;top:36px;line-height:16px;font-size:13.9px;color:#000;letter-spacing:-0.564px;">_ResourceEditorSamples</span>
<svg style="left:25px;top:59px" width="11" height="11" viewBox="0 0 11 11"><defs><linearGradient id="eg" x1="0" y1="0" x2="0" y2="1"><stop offset=".45" stop-color="#fff"/><stop offset="1" stop-color="#d8d8d8"/></linearGradient></defs><rect x=".5" y=".5" width="10" height="10" rx="1.5" fill="url(#eg)" stroke="#8e8e8e"/><path d="M2.5 5.5 H8.5" stroke="#3a4e9c" stroke-width="1"/><path d="M5.5 2.5 V8.5" stroke="#3a4e9c" stroke-width="1"/></svg>
<svg style="left:43px;top:55px" width="13" height="15" viewBox="0 0 13 15"><rect x=".5" y=".5" width="11" height="14" fill="#ffe9a6" stroke="#f4cf63"/><rect x="10" y="8.5" width="2.5" height="6" fill="#fff1c4" stroke="#f0c54e"/></svg>
<span class="t" style="left:61.2px;top:54px;line-height:16px;font-size:13.9px;color:#000;letter-spacing:-0.421px;">Archive</span>
<svg style="left:25px;top:77px" width="11" height="11" viewBox="0 0 11 11"><defs><linearGradient id="eg" x1="0" y1="0" x2="0" y2="1"><stop offset=".45" stop-color="#fff"/><stop offset="1" stop-color="#d8d8d8"/></linearGradient></defs><rect x=".5" y=".5" width="10" height="10" rx="1.5" fill="url(#eg)" stroke="#8e8e8e"/><path d="M2.5 5.5 H8.5" stroke="#3a4e9c" stroke-width="1"/><path d="M5.5 2.5 V8.5" stroke="#3a4e9c" stroke-width="1"/></svg>
<svg style="left:43px;top:73px" width="13" height="15" viewBox="0 0 13 15"><rect x=".5" y=".5" width="11" height="14" fill="#ffe9a6" stroke="#f4cf63"/><rect x="10" y="8.5" width="2.5" height="6" fill="#fff1c4" stroke="#f0c54e"/></svg>
<span class="t" style="left:61.2px;top:72px;line-height:16px;font-size:13.9px;color:#000;letter-spacing:-0.650px;">Audio</span>
<svg style="left:25px;top:95px" width="11" height="11" viewBox="0 0 11 11"><defs><linearGradient id="eg" x1="0" y1="0" x2="0" y2="1"><stop offset=".45" stop-color="#fff"/><stop offset="1" stop-color="#d8d8d8"/></linearGradient></defs><rect x=".5" y=".5" width="10" height="10" rx="1.5" fill="url(#eg)" stroke="#8e8e8e"/><path d="M2.5 5.5 H8.5" stroke="#3a4e9c" stroke-width="1"/><path d="M5.5 2.5 V8.5" stroke="#3a4e9c" stroke-width="1"/></svg>
<svg style="left:43px;top:91px" width="13" height="15" viewBox="0 0 13 15"><rect x=".5" y=".5" width="11" height="14" fill="#ffe9a6" stroke="#f4cf63"/><rect x="10" y="8.5" width="2.5" height="6" fill="#fff1c4" stroke="#f0c54e"/></svg>
<span class="t" style="left:61.2px;top:90px;line-height:16px;font-size:13.9px;color:#000;letter-spacing:-0.586px;">Importing3DModel</span>
<svg style="left:25px;top:113px" width="11" height="11" viewBox="0 0 11 11"><defs><linearGradient id="eg" x1="0" y1="0" x2="0" y2="1"><stop offset=".45" stop-color="#fff"/><stop offset="1" stop-color="#d8d8d8"/></linearGradient></defs><rect x=".5" y=".5" width="10" height="10" rx="1.5" fill="url(#eg)" stroke="#8e8e8e"/><path d="M2.5 5.5 H8.5" stroke="#3a4e9c" stroke-width="1"/></svg>
<svg style="left:43px;top:109px" width="13" height="15" viewBox="0 0 13 15"><rect x=".5" y=".5" width="11" height="14" fill="#ffe9a6" stroke="#f4cf63"/><rect x="10" y="8.5" width="2.5" height="6" fill="#fff1c4" stroke="#f0c54e"/></svg>
<span class="t" style="left:61.2px;top:108px;line-height:16px;font-size:13.9px;color:#000;letter-spacing:-0.299px;">Physics</span>
<svg style="left:59px;top:126px" width="18" height="18" viewBox="0 0 18 18"><path d="M7.30 4.01 L8.86 4.45 L8.86 5.55 L7.30 5.99 L8.09 7.41 L7.31 8.19 L5.89 7.40 L5.45 8.96 L4.35 8.96 L3.91 7.40 L2.49 8.19 L1.71 7.41 L2.50 5.99 L0.94 5.55 L0.94 4.45 L2.50 4.01 L1.71 2.59 L2.49 1.81 L3.91 2.60 L4.35 1.04 L5.45 1.04 L5.89 2.60 L7.31 1.81 L8.09 2.59Z" fill="#0000ff"/><circle cx="4.9" cy="5" r="1.5" fill="#fff"/><path d="M15.10 11.40 L17.11 12.89 L16.49 14.38 L14.02 14.02 L14.38 16.49 L12.89 17.11 L11.40 15.10 L9.91 17.11 L8.42 16.49 L8.78 14.02 L6.31 14.38 L5.69 12.89 L7.70 11.40 L5.69 9.91 L6.31 8.42 L8.78 8.78 L8.42 6.31 L9.91 5.69 L11.40 7.70 L12.89 5.69 L14.38 6.31 L14.02 8.78 L16.49 8.42 L17.11 9.91Z" fill="#0000ff"/><circle cx="11.4" cy="11.4" r="2.7" fill="#fff"/><circle cx="11.4" cy="11.4" r="1.5" fill="#0000ff"/></svg>
<span class="t" style="left:80.3px;top:126px;line-height:16px;font-size:13.9px;color:#000;letter-spacing:-0.300px;">AttractorMotor.physics</span>
<svg style="left:59px;top:144px" width="18" height="18" viewBox="0 0 18 18"><path d="M7.30 4.01 L8.86 4.45 L8.86 5.55 L7.30 5.99 L8.09 7.41 L7.31 8.19 L5.89 7.40 L5.45 8.96 L4.35 8.96 L3.91 7.40 L2.49 8.19 L1.71 7.41 L2.50 5.99 L0.94 5.55 L0.94 4.45 L2.50 4.01 L1.71 2.59 L2.49 1.81 L3.91 2.60 L4.35 1.04 L5.45 1.04 L5.89 2.60 L7.31 1.81 L8.09 2.59Z" fill="#0000ff"/><circle cx="4.9" cy="5" r="1.5" fill="#fff"/><path d="M15.10 11.40 L17.11 12.89 L16.49 14.38 L14.02 14.02 L14.38 16.49 L12.89 17.11 L11.40 15.10 L9.91 17.11 L8.42 16.49 L8.78 14.02 L6.31 14.38 L5.69 12.89 L7.70 11.40 L5.69 9.91 L6.31 8.42 L8.78 8.78 L8.42 6.31 L9.91 5.69 L11.40 7.70 L12.89 5.69 L14.38 6.31 L14.02 8.78 L16.49 8.42 L17.11 9.91Z" fill="#0000ff"/><circle cx="11.4" cy="11.4" r="2.7" fill="#fff"/><circle cx="11.4" cy="11.4" r="1.5" fill="#0000ff"/></svg>
<span class="t" style="left:80.3px;top:144px;line-height:16px;font-size:13.9px;color:#000;letter-spacing:-0.361px;">AttractorMotor2.physics</span>
<svg style="left:59px;top:162px" width="18" height="18" viewBox="0 0 18 18"><path d="M7.30 4.01 L8.86 4.45 L8.86 5.55 L7.30 5.99 L8.09 7.41 L7.31 8.19 L5.89 7.40 L5.45 8.96 L4.35 8.96 L3.91 7.40 L2.49 8.19 L1.71 7.41 L2.50 5.99 L0.94 5.55 L0.94 4.45 L2.50 4.01 L1.71 2.59 L2.49 1.81 L3.91 2.60 L4.35 1.04 L5.45 1.04 L5.89 2.60 L7.31 1.81 L8.09 2.59Z" fill="#0000ff"/><circle cx="4.9" cy="5" r="1.5" fill="#fff"/><path d="M15.10 11.40 L17.11 12.89 L16.49 14.38 L14.02 14.02 L14.38 16.49 L12.89 17.11 L11.40 15.10 L9.91 17.11 L8.42 16.49 L8.78 14.02 L6.31 14.38 L5.69 12.89 L7.70 11.40 L5.69 9.91 L6.31 8.42 L8.78 8.78 L8.42 6.31 L9.91 5.69 L11.40 7.70 L12.89 5.69 L14.38 6.31 L14.02 8.78 L16.49 8.42 L17.11 9.91Z" fill="#0000ff"/><circle cx="11.4" cy="11.4" r="2.7" fill="#fff"/><circle cx="11.4" cy="11.4" r="1.5" fill="#0000ff"/></svg>
<span class="t" style="left:80.3px;top:162px;line-height:16px;font-size:13.9px;color:#000;letter-spacing:-0.405px;">AutoCenterOfMass.physics</span>
<svg style="left:59px;top:180px" width="18" height="18" viewBox="0 0 18 18"><path d="M7.30 4.01 L8.86 4.45 L8.86 5.55 L7.30 5.99 L8.09 7.41 L7.31 8.19 L5.89 7.40 L5.45 8.96 L4.35 8.96 L3.91 7.40 L2.49 8.19 L1.71 7.41 L2.50 5.99 L0.94 5.55 L0.94 4.45 L2.50 4.01 L1.71 2.59 L2.49 1.81 L3.91 2.60 L4.35 1.04 L5.45 1.04 L5.89 2.60 L7.31 1.81 L8.09 2.59Z" fill="#0000ff"/><circle cx="4.9" cy="5" r="1.5" fill="#fff"/><path d="M15.10 11.40 L17.11 12.89 L16.49 14.38 L14.02 14.02 L14.38 16.49 L12.89 17.11 L11.40 15.10 L9.91 17.11 L8.42 16.49 L8.78 14.02 L6.31 14.38 L5.69 12.89 L7.70 11.40 L5.69 9.91 L6.31 8.42 L8.78 8.78 L8.42 6.31 L9.91 5.69 L11.40 7.70 L12.89 5.69 L14.38 6.31 L14.02 8.78 L16.49 8.42 L17.11 9.91Z" fill="#0000ff"/><circle cx="11.4" cy="11.4" r="2.7" fill="#fff"/><circle cx="11.4" cy="11.4" r="1.5" fill="#0000ff"/></svg>
<span class="t" style="left:80.3px;top:180px;line-height:16px;font-size:13.9px;color:#000;letter-spacing:-0.285px;">BallJoint.physics</span>
<svg style="left:59px;top:198px" width="18" height="18" viewBox="0 0 18 18"><path d="M7.30 4.01 L8.86 4.45 L8.86 5.55 L7.30 5.99 L8.09 7.41 L7.31 8.19 L5.89 7.40 L5.45 8.96 L4.35 8.96 L3.91 7.40 L2.49 8.19 L1.71 7.41 L2.50 5.99 L0.94 5.55 L0.94 4.45 L2.50 4.01 L1.71 2.59 L2.49 1.81 L3.91 2.60 L4.35 1.04 L5.45 1.04 L5.89 2.60 L7.31 1.81 L8.09 2.59Z" fill="#0000ff"/><circle cx="4.9" cy="5" r="1.5" fill="#fff"/><path d="M15.10 11.40 L17.11 12.89 L16.49 14.38 L14.02 14.02 L14.38 16.49 L12.89 17.11 L11.40 15.10 L9.91 17.11 L8.42 16.49 L8.78 14.02 L6.31 14.38 L5.69 12.89 L7.70 11.40 L5.69 9.91 L6.31 8.42 L8.78 8.78 L8.42 6.31 L9.91 5.69 L11.40 7.70 L12.89 5.69 L14.38 6.31 L14.02 8.78 L16.49 8.42 L17.11 9.91Z" fill="#0000ff"/><circle cx="11.4" cy="11.4" r="2.7" fill="#fff"/><circle cx="11.4" cy="11.4" r="1.5" fill="#0000ff"/></svg>
<span class="t" style="left:80.3px;top:198px;line-height:16px;font-size:13.9px;color:#000;letter-spacing:-0.406px;">BigCount.physics</span>
<svg style="left:59px;top:216px" width="18" height="18" viewBox="0 0 18 18"><path d="M7.30 4.01 L8.86 4.45 L8.86 5.55 L7.30 5.99 L8.09 7.41 L7.31 8.19 L5.89 7.40 L5.45 8.96 L4.35 8.96 L3.91 7.40 L2.49 8.19 L1.71 7.41 L2.50 5.99 L0.94 5.55 L0.94 4.45 L2.50 4.01 L1.71 2.59 L2.49 1.81 L3.91 2.60 L4.35 1.04 L5.45 1.04 L5.89 2.60 L7.31 1.81 L8.09 2.59Z" fill="#0000ff"/><circle cx="4.9" cy="5" r="1.5" fill="#fff"/><path d="M15.10 11.40 L17.11 12.89 L16.49 14.38 L14.02 14.02 L14.38 16.49 L12.89 17.11 L11.40 15.10 L9.91 17.11 L8.42 16.49 L8.78 14.02 L6.31 14.38 L5.69 12.89 L7.70 11.40 L5.69 9.91 L6.31 8.42 L8.78 8.78 L8.42 6.31 L9.91 5.69 L11.40 7.70 L12.89 5.69 L14.38 6.31 L14.02 8.78 L16.49 8.42 L17.11 9.91Z" fill="#0000ff"/><circle cx="11.4" cy="11.4" r="2.7" fill="#fff"/><circle cx="11.4" cy="11.4" r="1.5" fill="#0000ff"/></svg>
<span class="t" style="left:80.3px;top:216px;line-height:16px;font-size:13.9px;color:#000;letter-spacing:-0.431px;">BigCount2.physics</span>
<svg style="left:59px;top:234px" width="18" height="18" viewBox="0 0 18 18"><path d="M7.30 4.01 L8.86 4.45 L8.86 5.55 L7.30 5.99 L8.09 7.41 L7.31 8.19 L5.89 7.40 L5.45 8.96 L4.35 8.96 L3.91 7.40 L2.49 8.19 L1.71 7.41 L2.50 5.99 L0.94 5.55 L0.94 4.45 L2.50 4.01 L1.71 2.59 L2.49 1.81 L3.91 2.60 L4.35 1.04 L5.45 1.04 L5.89 2.60 L7.31 1.81 L8.09 2.59Z" fill="#0000ff"/><circle cx="4.9" cy="5" r="1.5" fill="#fff"/><path d="M15.10 11.40 L17.11 12.89 L16.49 14.38 L14.02 14.02 L14.38 16.49 L12.89 17.11 L11.40 15.10 L9.91 17.11 L8.42 16.49 L8.78 14.02 L6.31 14.38 L5.69 12.89 L7.70 11.40 L5.69 9.91 L6.31 8.42 L8.78 8.78 L8.42 6.31 L9.91 5.69 L11.40 7.70 L12.89 5.69 L14.38 6.31 L14.02 8.78 L16.49 8.42 L17.11 9.91Z" fill="#0000ff"/><circle cx="11.4" cy="11.4" r="2.7" fill="#fff"/><circle cx="11.4" cy="11.4" r="1.5" fill="#0000ff"/></svg>
<span class="t" style="left:80.3px;top:234px;line-height:16px;font-size:13.9px;color:#000;letter-spacing:-0.380px;">BreakableJoint.physics</span>
<svg style="left:59px;top:252px" width="18" height="18" viewBox="0 0 18 18"><path d="M7.30 4.01 L8.86 4.45 L8.86 5.55 L7.30 5.99 L8.09 7.41 L7.31 8.19 L5.89 7.40 L5.45 8.96 L4.35 8.96 L3.91 7.40 L2.49 8.19 L1.71 7.41 L2.50 5.99 L0.94 5.55 L0.94 4.45 L2.50 4.01 L1.71 2.59 L2.49 1.81 L3.91 2.60 L4.35 1.04 L5.45 1.04 L5.89 2.60 L7.31 1.81 L8.09 2.59Z" fill="#0000ff"/><circle cx="4.9" cy="5" r="1.5" fill="#fff"/><path d="M15.10 11.40 L17.11 12.89 L16.49 14.38 L14.02 14.02 L14.38 16.49 L12.89 17.11 L11.40 15.10 L9.91 17.11 L8.42 16.49 L8.78 14.02 L6.31 14.38 L5.69 12.89 L7.70 11.40 L5.69 9.91 L6.31 8.42 L8.78 8.78 L8.42 6.31 L9.91 5.69 L11.40 7.70 L12.89 5.69 L14.38 6.31 L14.02 8.78 L16.49 8.42 L17.11 9.91Z" fill="#0000ff"/><circle cx="11.4" cy="11.4" r="2.7" fill="#fff"/><circle cx="11.4" cy="11.4" r="1.5" fill="#0000ff"/></svg>
<span class="t" style="left:80.3px;top:252px;line-height:16px;font-size:13.9px;color:#000;letter-spacing:-0.364px;">Bridge.physics</span>
<svg style="left:59px;top:270px" width="18" height="18" viewBox="0 0 18 18"><path d="M7.30 4.01 L8.86 4.45 L8.86 5.55 L7.30 5.99 L8.09 7.41 L7.31 8.19 L5.89 7.40 L5.45 8.96 L4.35 8.96 L3.91 7.40 L2.49 8.19 L1.71 7.41 L2.50 5.99 L0.94 5.55 L0.94 4.45 L2.50 4.01 L1.71 2.59 L2.49 1.81 L3.91 2.60 L4.35 1.04 L5.45 1.04 L5.89 2.60 L7.31 1.81 L8.09 2.59Z" fill="#0000ff"/><circle cx="4.9" cy="5" r="1.5" fill="#fff"/><path d="M15.10 11.40 L17.11 12.89 L16.49 14.38 L14.02 14.02 L14.38 16.49 L12.89 17.11 L11.40 15.10 L9.91 17.11 L8.42 16.49 L8.78 14.02 L6.31 14.38 L5.69 12.89 L7.70 11.40 L5.69 9.91 L6.31 8.42 L8.78 8.78 L8.42 6.31 L9.91 5.69 L11.40 7.70 L12.89 5.69 L14.38 6.31 L14.02 8.78 L16.49 8.42 L17.11 9.91Z" fill="#0000ff"/><circle cx="11.4" cy="11.4" r="2.7" fill="#fff"/><circle cx="11.4" cy="11.4" r="1.5" fill="#0000ff"/></svg>
<span class="t" style="left:80.3px;top:270px;line-height:16px;font-size:13.9px;color:#000;letter-spacing:-0.394px;">ContinuousCollisionDetection.physics</span>
<svg style="left:61.7px;top:290px" width="14" height="15" viewBox="0 0 14 15"><path d="M.3 2.6 L4.8 0 L12.6 1 L12.1 9.5 L8.8 13.8 L.8 11.5 Z" fill="#00e400"/><path d="M.3 2.6 L4.8 0 L12.6 1 L9.4 3.6 Z" fill="#00ff00"/><path d="M9.4 3.6 L12.6 1 L12.1 9.5 L8.8 13.8Z" fill="#009c00"/><path d="M.3 2.6 L9.4 3.6 L8.8 13.8 L.8 11.5 Z" fill="#00d800"/></svg>
<span class="t" style="left:80.3px;top:288px;line-height:16px;font-size:13.9px;color:#000;letter-spacing:-0.535px;">ConvexHull.mesh</span>
<svg style="left:59px;top:306px" width="18" height="18" viewBox="0 0 18 18"><path d="M7.30 4.01 L8.86 4.45 L8.86 5.55 L7.30 5.99 L8.09 7.41 L7.31 8.19 L5.89 7.40 L5.45 8.96 L4.35 8.96 L3.91 7.40 L2.49 8.19 L1.71 7.41 L2.50 5.99 L0.94 5.55 L0.94 4.45 L2.50 4.01 L1.71 2.59 L2.49 1.81 L3.91 2.60 L4.35 1.04 L5.45 1.04 L5.89 2.60 L7.31 1.81 L8.09 2.59Z" fill="#0000ff"/><circle cx="4.9" cy="5" r="1.5" fill="#fff"/><path d="M15.10 11.40 L17.11 12.89 L16.49 14.38 L14.02 14.02 L14.38 16.49 L12.89 17.11 L11.40 15.10 L9.91 17.11 L8.42 16.49 L8.78 14.02 L6.31 14.38 L5.69 12.89 L7.70 11.40 L5.69 9.91 L6.31 8.42 L8.78 8.78 L8.42 6.31 L9.91 5.69 L11.40 7.70 L12.89 5.69 L14.38 6.31 L14.02 8.78 L16.49 8.42 L17.11 9.91Z" fill="#0000ff"/><circle cx="11.4" cy="11.4" r="2.7" fill="#fff"/><circle cx="11.4" cy="11.4" r="1.5" fill="#0000ff"/></svg>
<span class="t" style="left:80.3px;top:306px;line-height:16px;font-size:13.9px;color:#000;letter-spacing:-0.416px;">ConvexHull.physics</span>
<svg style="left:59px;top:324px" width="18" height="18" viewBox="0 0 18 18"><path d="M7.30 4.01 L8.86 4.45 L8.86 5.55 L7.30 5.99 L8.09 7.41 L7.31 8.19 L5.89 7.40 L5.45 8.96 L4.35 8.96 L3.91 7.40 L2.49 8.19 L1.71 7.41 L2.50 5.99 L0.94 5.55 L0.94 4.45 L2.50 4.01 L1.71 2.59 L2.49 1.81 L3.91 2.60 L4.35 1.04 L5.45 1.04 L5.89 2.60 L7.31 1.81 L8.09 2.59Z" fill="#0000ff"/><circle cx="4.9" cy="5" r="1.5" fill="#fff"/><path d="M15.10 11.40 L17.11 12.89 L16.49 14.38 L14.02 14.02 L14.38 16.49 L12.89 17.11 L11.40 15.10 L9.91 17.11 L8.42 16.49 L8.78 14.02 L6.31 14.38 L5.69 12.89 L7.70 11.40 L5.69 9.91 L6.31 8.42 L8.78 8.78 L8.42 6.31 L9.91 5.69 L11.40 7.70 L12.89 5.69 L14.38 6.31 L14.02 8.78 L16.49 8.42 L17.11 9.91Z" fill="#0000ff"/><circle cx="11.4" cy="11.4" r="2.7" fill="#fff"/><circle cx="11.4" cy="11.4" r="1.5" fill="#0000ff"/></svg>
<span class="t" style="left:80.3px;top:324px;line-height:16px;font-size:13.9px;color:#000;letter-spacing:-0.436px;">ConvexHullDecomposition.physics</span>
<svg style="left:59px;top:342px" width="18" height="18" viewBox="0 0 18 18"><path d="M7.30 4.01 L8.86 4.45 L8.86 5.55 L7.30 5.99 L8.09 7.41 L7.31 8.19 L5.89 7.40 L5.45 8.96 L4.35 8.96 L3.91 7.40 L2.49 8.19 L1.71 7.41 L2.50 5.99 L0.94 5.55 L0.94 4.45 L2.50 4.01 L1.71 2.59 L2.49 1.81 L3.91 2.60 L4.35 1.04 L5.45 1.04 L5.89 2.60 L7.31 1.81 L8.09 2.59Z" fill="#0000ff"/><circle cx="4.9" cy="5" r="1.5" fill="#fff"/><path d="M15.10 11.40 L17.11 12.89 L16.49 14.38 L14.02 14.02 L14.38 16.49 L12.89 17.11 L11.40 15.10 L9.91 17.11 L8.42 16.49 L8.78 14.02 L6.31 14.38 L5.69 12.89 L7.70 11.40 L5.69 9.91 L6.31 8.42 L8.78 8.78 L8.42 6.31 L9.91 5.69 L11.40 7.70 L12.89 5.69 L14.38 6.31 L14.02 8.78 L16.49 8.42 L17.11 9.91Z" fill="#0000ff"/><circle cx="11.4" cy="11.4" r="2.7" fill="#fff"/><circle cx="11.4" cy="11.4" r="1.5" fill="#0000ff"/></svg>
<span class="t" style="left:80.3px;top:342px;line-height:16px;font-size:13.9px;color:#000;letter-spacing:-0.318px;">Friction.physics</span>
<svg style="left:59px;top:360px" width="18" height="18" viewBox="0 0 18 18"><path d="M7.30 4.01 L8.86 4.45 L8.86 5.55 L7.30 5.99 L8.09 7.41 L7.31 8.19 L5.89 7.40 L5.45 8.96 L4.35 8.96 L3.91 7.40 L2.49 8.19 L1.71 7.41 L2.50 5.99 L0.94 5.55 L0.94 4.45 L2.50 4.01 L1.71 2.59 L2.49 1.81 L3.91 2.60 L4.35 1.04 L5.45 1.04 L5.89 2.60 L7.31 1.81 L8.09 2.59Z" fill="#0000ff"/><circle cx="4.9" cy="5" r="1.5" fill="#fff"/><path d="M15.10 11.40 L17.11 12.89 L16.49 14.38 L14.02 14.02 L14.38 16.49 L12.89 17.11 L11.40 15.10 L9.91 17.11 L8.42 16.49 L8.78 14.02 L6.31 14.38 L5.69 12.89 L7.70 11.40 L5.69 9.91 L6.31 8.42 L8.78 8.78 L8.42 6.31 L9.91 5.69 L11.40 7.70 L12.89 5.69 L14.38 6.31 L14.02 8.78 L16.49 8.42 L17.11 9.91Z" fill="#0000ff"/><circle cx="11.4" cy="11.4" r="2.7" fill="#fff"/><circle cx="11.4" cy="11.4" r="1.5" fill="#0000ff"/></svg>
<span class="t" style="left:80.3px;top:360px;line-height:16px;font-size:13.9px;color:#000;letter-spacing:-0.449px;">GearedMotor.physics</span>
<svg style="left:59px;top:378px" width="18" height="18" viewBox="0 0 18 18"><path d="M7.30 4.01 L8.86 4.45 L8.86 5.55 L7.30 5.99 L8.09 7.41 L7.31 8.19 L5.89 7.40 L5.45 8.96 L4.35 8.96 L3.91 7.40 L2.49 8.19 L1.71 7.41 L2.50 5.99 L0.94 5.55 L0.94 4.45 L2.50 4.01 L1.71 2.59 L2.49 1.81 L3.91 2.60 L4.35 1.04 L5.45 1.04 L5.89 2.60 L7.31 1.81 L8.09 2.59Z" fill="#0000ff"/><circle cx="4.9" cy="5" r="1.5" fill="#fff"/><path d="M15.10 11.40 L17.11 12.89 L16.49 14.38 L14.02 14.02 L14.38 16.49 L12.89 17.11 L11.40 15.10 L9.91 17.11 L8.42 16.49 L8.78 14.02 L6.31 14.38 L5.69 12.89 L7.70 11.40 L5.69 9.91 L6.31 8.42 L8.78 8.78 L8.42 6.31 L9.91 5.69 L11.40 7.70 L12.89 5.69 L14.38 6.31 L14.02 8.78 L16.49 8.42 L17.11 9.91Z" fill="#0000ff"/><circle cx="11.4" cy="11.4" r="2.7" fill="#fff"/><circle cx="11.4" cy="11.4" r="1.5" fill="#0000ff"/></svg>
<span class="t" style="left:80.3px;top:378px;line-height:16px;font-size:13.9px;color:#000;letter-spacing:-0.512px;">GearedMotor2.physics</span>
<svg style="left:59px;top:396px" width="18" height="18" viewBox="0 0 18 18"><path d="M7.30 4.01 L8.86 4.45 L8.86 5.55 L7.30 5.99 L8.09 7.41 L7.31 8.19 L5.89 7.40 L5.45 8.96 L4.35 8.96 L3.91 7.40 L2.49 8.19 L1.71 7.41 L2.50 5.99 L0.94 5.55 L0.94 4.45 L2.50 4.01 L1.71 2.59 L2.49 1.81 L3.91 2.60 L4.35 1.04 L5.45 1.04 L5.89 2.60 L7.31 1.81 L8.09 2.59Z" fill="#0000ff"/><circle cx="4.9" cy="5" r="1.5" fill="#fff"/><path d="M15.10 11.40 L17.11 12.89 L16.49 14.38 L14.02 14.02 L14.38 16.49 L12.89 17.11 L11.40 15.10 L9.91 17.11 L8.42 16.49 L8.78 14.02 L6.31 14.38 L5.69 12.89 L7.70 11.40 L5.69 9.91 L6.31 8.42 L8.78 8.78 L8.42 6.31 L9.91 5.69 L11.40 7.70 L12.89 5.69 L14.38 6.31 L14.02 8.78 L16.49 8.42 L17.11 9.91Z" fill="#0000ff"/><circle cx="11.4" cy="11.4" r="2.7" fill="#fff"/><circle cx="11.4" cy="11.4" r="1.5" fill="#0000ff"/></svg>
<span class="t" style="left:80.3px;top:396px;line-height:16px;font-size:13.9px;color:#000;letter-spacing:-0.512px;">GearedMotor3.physics</span>
<svg style="left:59px;top:414px" width="18" height="18" viewBox="0 0 18 18"><path d="M7.30 4.01 L8.86 4.45 L8.86 5.55 L7.30 5.99 L8.09 7.41 L7.31 8.19 L5.89 7.40 L5.45 8.96 L4.35 8.96 L3.91 7.40 L2.49 8.19 L1.71 7.41 L2.50 5.99 L0.94 5.55 L0.94 4.45 L2.50 4.01 L1.71 2.59 L2.49 1.81 L3.91 2.60 L4.35 1.04 L5.45 1.04 L5.89 2.60 L7.31 1.81 L8.09 2.59Z" fill="#0000ff"/><circle cx="4.9" cy="5" r="1.5" fill="#fff"/><path d="M15.10 11.40 L17.11 12.89 L16.49 14.38 L14.02 14.02 L14.38 16.49 L12.89 17.11 L11.40 15.10 L9.91 17.11 L8.42 16.49 L8.78 14.02 L6.31 14.38 L5.69 12.89 L7.70 11.40 L5.69 9.91 L6.31 8.42 L8.78 8.78 L8.42 6.31 L9.91 5.69 L11.40 7.70 L12.89 5.69 L14.38 6.31 L14.02 8.78 L16.49 8.42 L17.11 9.91Z" fill="#0000ff"/><circle cx="11.4" cy="11.4" r="2.7" fill="#fff"/><circle cx="11.4" cy="11.4" r="1.5" fill="#0000ff"/></svg>
<div class="a" style="left:78px;top:414px;width:93px;height:18px;background:#3399ff"></div>
<span class="t" style="left:80.3px;top:414px;line-height:16px;font-size:13.9px;color:#fff;letter-spacing:-0.397px;">Gears.physics</span>
<svg style="left:59px;top:432px" width="18" height="18" viewBox="0 0 18 18"><path d="M7.30 4.01 L8.86 4.45 L8.86 5.55 L7.30 5.99 L8.09 7.41 L7.31 8.19 L5.89 7.40 L5.45 8.96 L4.35 8.96 L3.91 7.40 L2.49 8.19 L1.71 7.41 L2.50 5.99 L0.94 5.55 L0.94 4.45 L2.50 4.01 L1.71 2.59 L2.49 1.81 L3.91 2.60 L4.35 1.04 L5.45 1.04 L5.89 2.60 L7.31 1.81 L8.09 2.59Z" fill="#0000ff"/><circle cx="4.9" cy="5" r="1.5" fill="#fff"/><path d="M15.10 11.40 L17.11 12.89 L16.49 14.38 L14.02 14.02 L14.38 16.49 L12.89 17.11 L11.40 15.10 L9.91 17.11 L8.42 16.49 L8.78 14.02 L6.31 14.38 L5.69 12.89 L7.70 11.40 L5.69 9.91 L6.31 8.42 L8.78 8.78 L8.42 6.31 L9.91 5.69 L11.40 7.70 L12.89 5.69 L14.38 6.31 L14.02 8.78 L16.49 8.42 L17.11 9.91Z" fill="#0000ff"/><circle cx="11.4" cy="11.4" r="2.7" fill="#fff"/><circle cx="11.4" cy="11.4" r="1.5" fill="#0000ff"/></svg>
<span class="t" style="left:80.3px;top:432px;line-height:16px;font-size:13.9px;color:#000;letter-spacing:-0.416px;">PseudoCloth.physics</span>
<svg style="left:59px;top:450px" width="18" height="18" viewBox="0 0 18 18"><path d="M7.30 4.01 L8.86 4.45 L8.86 5.55 L7.30 5.99 L8.09 7.41 L7.31 8.19 L5.89 7.40 L5.45 8.96 L4.35 8.96 L3.91 7.40 L2.49 8.19 L1.71 7.41 L2.50 5.99 L0.94 5.55 L0.94 4.45 L2.50 4.01 L1.71 2.59 L2.49 1.81 L3.91 2.60 L4.35 1.04 L5.45 1.04 L5.89 2.60 L7.31 1.81 L8.09 2.59Z" fill="#0000ff"/><circle cx="4.9" cy="5" r="1.5" fill="#fff"/><path d="M15.10 11.40 L17.11 12.89 L16.49 14.38 L14.02 14.02 L14.38 16.49 L12.89 17.11 L11.40 15.10 L9.91 17.11 L8.42 16.49 L8.78 14.02 L6.31 14.38 L5.69 12.89 L7.70 11.40 L5.69 9.91 L6.31 8.42 L8.78 8.78 L8.42 6.31 L9.91 5.69 L11.40 7.70 L12.89 5.69 L14.38 6.31 L14.02 8.78 L16.49 8.42 L17.11 9.91Z" fill="#0000ff"/><circle cx="11.4" cy="11.4" r="2.7" fill="#fff"/><circle cx="11.4" cy="11.4" r="1.5" fill="#0000ff"/></svg>
<span class="t" style="left:80.3px;top:450px;line-height:16px;font-size:13.9px;color:#000;letter-spacing:-0.453px;">PseudoClothBreakable.physics</span>
<svg style="left:59px;top:468px" width="18" height="18" viewBox="0 0 18 18"><path d="M7.30 4.01 L8.86 4.45 L8.86 5.55 L7.30 5.99 L8.09 7.41 L7.31 8.19 L5.89 7.40 L5.45 8.96 L4.35 8.96 L3.91 7.40 L2.49 8.19 L1.71 7.41 L2.50 5.99 L0.94 5.55 L0.94 4.45 L2.50 4.01 L1.71 2.59 L2.49 1.81 L3.91 2.60 L4.35 1.04 L5.45 1.04 L5.89 2.60 L7.31 1.81 L8.09 2.59Z" fill="#0000ff"/><circle cx="4.9" cy="5" r="1.5" fill="#fff"/><path d="M15.10 11.40 L17.11 12.89 L16.49 14.38 L14.02 14.02 L14.38 16.49 L12.89 17.11 L11.40 15.10 L9.91 17.11 L8.42 16.49 L8.78 14.02 L6.31 14.38 L5.69 12.89 L7.70 11.40 L5.69 9.91 L6.31 8.42 L8.78 8.78 L8.42 6.31 L9.91 5.69 L11.40 7.70 L12.89 5.69 L14.38 6.31 L14.02 8.78 L16.49 8.42 L17.11 9.91Z" fill="#0000ff"/><circle cx="11.4" cy="11.4" r="2.7" fill="#fff"/><circle cx="11.4" cy="11.4" r="1.5" fill="#0000ff"/></svg>
<span class="t" style="left:80.3px;top:468px;line-height:16px;font-size:13.9px;color:#000;letter-spacing:-0.443px;">Ragdoll.physics</span>
<svg style="left:59px;top:486px" width="18" height="18" viewBox="0 0 18 18"><path d="M7.30 4.01 L8.86 4.45 L8.86 5.55 L7.30 5.99 L8.09 7.41 L7.31 8.19 L5.89 7.40 L5.45 8.96 L4.35 8.96 L3.91 7.40 L2.49 8.19 L1.71 7.41 L2.50 5.99 L0.94 5.55 L0.94 4.45 L2.50 4.01 L1.71 2.59 L2.49 1.81 L3.91 2.60 L4.35 1.04 L5.45 1.04 L5.89 2.60 L7.31 1.81 L8.09 2.59Z" fill="#0000ff"/><circle cx="4.9" cy="5" r="1.5" fill="#fff"/><path d="M15.10 11.40 L17.11 12.89 L16.49 14.38 L14.02 14.02 L14.38 16.49 L12.89 17.11 L11.40 15.10 L9.91 17.11 L8.42 16.49 L8.78 14.02 L6.31 14.38 L5.69 12.89 L7.70 11.40 L5.69 9.91 L6.31 8.42 L8.78 8.78 L8.42 6.31 L9.91 5.69 L11.40 7.70 L12.89 5.69 L14.38 6.31 L14.02 8.78 L16.49 8.42 L17.11 9.91Z" fill="#0000ff"/><circle cx="11.4" cy="11.4" r="2.7" fill="#fff"/><circle cx="11.4" cy="11.4" r="1.5" fill="#0000ff"/></svg>
<span class="t" style="left:80.3px;top:486px;line-height:16px;font-size:13.9px;color:#000;letter-spacing:-0.381px;">Rings.physics</span>
<svg style="left:59px;top:504px" width="18" height="18" viewBox="0 0 18 18"><path d="M7.30 4.01 L8.86 4.45 L8.86 5.55 L7.30 5.99 L8.09 7.41 L7.31 8.19 L5.89 7.40 L5.45 8.96 L4.35 8.96 L3.91 7.40 L2.49 8.19 L1.71 7.41 L2.50 5.99 L0.94 5.55 L0.94 4.45 L2.50 4.01 L1.71 2.59 L2.49 1.81 L3.91 2.60 L4.35 1.04 L5.45 1.04 L5.89 2.60 L7.31 1.81 L8.09 2.59Z" fill="#0000ff"/><circle cx="4.9" cy="5" r="1.5" fill="#fff"/><path d="M15.10 11.40 L17.11 12.89 L16.49 14.38 L14.02 14.02 L14.38 16.49 L12.89 17.11 L11.40 15.10 L9.91 17.11 L8.42 16.49 L8.78 14.02 L6.31 14.38 L5.69 12.89 L7.70 11.40 L5.69 9.91 L6.31 8.42 L8.78 8.78 L8.42 6.31 L9.91 5.69 L11.40 7.70 L12.89 5.69 L14.38 6.31 L14.02 8.78 L16.49 8.42 L17.11 9.91Z" fill="#0000ff"/><circle cx="11.4" cy="11.4" r="2.7" fill="#fff"/><circle cx="11.4" cy="11.4" r="1.5" fill="#0000ff"/></svg>
<span class="t" style="left:80.3px;top:504px;line-height:16px;font-size:13.9px;color:#000;letter-spacing:-0.366px;">ServoMotor.physics</span>
<svg style="left:59px;top:522px" width="18" height="18" viewBox="0 0 18 18"><path d="M7.30 4.01 L8.86 4.45 L8.86 5.55 L7.30 5.99 L8.09 7.41 L7.31 8.19 L5.89 7.40 L5.45 8.96 L4.35 8.96 L3.91 7.40 L2.49 8.19 L1.71 7.41 L2.50 5.99 L0.94 5.55 L0.94 4.45 L2.50 4.01 L1.71 2.59 L2.49 1.81 L3.91 2.60 L4.35 1.04 L5.45 1.04 L5.89 2.60 L7.31 1.81 L8.09 2.59Z" fill="#0000ff"/><circle cx="4.9" cy="5" r="1.5" fill="#fff"/><path d="M15.10 11.40 L17.11 12.89 L16.49 14.38 L14.02 14.02 L14.38 16.49 L12.89 17.11 L11.40 15.10 L9.91 17.11 L8.42 16.49 L8.78 14.02 L6.31 14.38 L5.69 12.89 L7.70 11.40 L5.69 9.91 L6.31 8.42 L8.78 8.78 L8.42 6.31 L9.91 5.69 L11.40 7.70 L12.89 5.69 L14.38 6.31 L14.02 8.78 L16.49 8.42 L17.11 9.91Z" fill="#0000ff"/><circle cx="11.4" cy="11.4" r="2.7" fill="#fff"/><circle cx="11.4" cy="11.4" r="1.5" fill="#0000ff"/></svg>
<span class="t" style="left:80.3px;top:522px;line-height:16px;font-size:13.9px;color:#000;letter-spacing:-0.415px;">ServoMotor2.physics</span>
<svg style="left:59px;top:540px" width="18" height="18" viewBox="0 0 18 18"><path d="M7.30 4.01 L8.86 4.45 L8.86 5.55 L7.30 5.99 L8.09 7.41 L7.31 8.19 L5.89 7.40 L5.45 8.96 L4.35 8.96 L3.91 7.40 L2.49 8.19 L1.71 7.41 L2.50 5.99 L0.94 5.55 L0.94 4.45 L2.50 4.01 L1.71 2.59 L2.49 1.81 L3.91 2.60 L4.35 1.04 L5.45 1.04 L5.89 2.60 L7.31 1.81 L8.09 2.59Z" fill="#0000ff"/><circle cx="4.9" cy="5" r="1.5" fill="#fff"/><path d="M15.10 11.40 L17.11 12.89 L16.49 14.38 L14.02 14.02 L14.38 16.49 L12.89 17.11 L11.40 15.10 L9.91 17.11 L8.42 16.49 L8.78 14.02 L6.31 14.38 L5.69 12.89 L7.70 11.40 L5.69 9.91 L6.31 8.42 L8.78 8.78 L8.42 6.31 L9.91 5.69 L11.40 7.70 L12.89 5.69 L14.38 6.31 L14.02 8.78 L16.49 8.42 L17.11 9.91Z" fill="#0000ff"/><circle cx="11.4" cy="11.4" r="2.7" fill="#fff"/><circle cx="11.4" cy="11.4" r="1.5" fill="#0000ff"/></svg>
<span class="t" style="left:80.3px;top:540px;line-height:16px;font-size:13.9px;color:#000;letter-spacing:-0.337px;">SliderJoint.physics</span>
<svg style="left:59px;top:558px" width="18" height="18" viewBox="0 0 18 18"><path d="M7.30 4.01 L8.86 4.45 L8.86 5.55 L7.30 5.99 L8.09 7.41 L7.31 8.19 L5.89 7.40 L5.45 8.96 L4.35 8.96 L3.91 7.40 L2.49 8.19 L1.71 7.41 L2.50 5.99 L0.94 5.55 L0.94 4.45 L2.50 4.01 L1.71 2.59 L2.49 1.81 L3.91 2.60 L4.35 1.04 L5.45 1.04 L5.89 2.60 L7.31 1.81 L8.09 2.59Z" fill="#0000ff"/><circle cx="4.9" cy="5" r="1.5" fill="#fff"/><path d="M15.10 11.40 L17.11 12.89 L16.49 14.38 L14.02 14.02 L14.38 16.49 L12.89 17.11 L11.40 15.10 L9.91 17.11 L8.42 16.49 L8.78 14.02 L6.31 14.38 L5.69 12.89 L7.70 11.40 L5.69 9.91 L6.31 8.42 L8.78 8.78 L8.42 6.31 L9.91 5.69 L11.40 7.70 L12.89 5.69 L14.38 6.31 L14.02 8.78 L16.49 8.42 L17.11 9.91Z" fill="#0000ff"/><circle cx="11.4" cy="11.4" r="2.7" fill="#fff"/><circle cx="11.4" cy="11.4" r="1.5" fill="#0000ff"/></svg>
<span class="t" style="left:80.3px;top:558px;line-height:16px;font-size:13.9px;color:#000;letter-spacing:-0.252px;">Stack.physics</span>
<svg style="left:59px;top:576px" width="18" height="18" viewBox="0 0 18 18"><path d="M7.30 4.01 L8.86 4.45 L8.86 5.55 L7.30 5.99 L8.09 7.41 L7.31 8.19 L5.89 7.40 L5.45 8.96 L4.35 8.96 L3.91 7.40 L2.49 8.19 L1.71 7.41 L2.50 5.99 L0.94 5.55 L0.94 4.45 L2.50 4.01 L1.71 2.59 L2.49 1.81 L3.91 2.60 L4.35 1.04 L5.45 1.04 L5.89 2.60 L7.31 1.81 L8.09 2.59Z" fill="#0000ff"/><circle cx="4.9" cy="5" r="1.5" fill="#fff"/><path d="M15.10 11.40 L17.11 12.89 L16.49 14.38 L14.02 14.02 L14.38 16.49 L12.89 17.11 L11.40 15.10 L9.91 17.11 L8.42 16.49 L8.78 14.02 L6.31 14.38 L5.69 12.89 L7.70 11.40 L5.69 9.91 L6.31 8.42 L8.78 8.78 L8.42 6.31 L9.91 5.69 L11.40 7.70 L12.89 5.69 L14.38 6.31 L14.02 8.78 L16.49 8.42 L17.11 9.91Z" fill="#0000ff"/><circle cx="11.4" cy="11.4" r="2.7" fill="#fff"/><circle cx="11.4" cy="11.4" r="1.5" fill="#0000ff"/></svg>
<span class="t" style="left:80.3px;top:576px;line-height:16px;font-size:13.9px;color:#000;letter-spacing:-0.250px;">Stack2.physics</span>
<svg style="left:61.7px;top:596px" width="14" height="15" viewBox="0 0 14 15"><path d="M.3 2.6 L4.8 0 L12.6 1 L12.1 9.5 L8.8 13.8 L.8 11.5 Z" fill="#00e400"/><path d="M.3 2.6 L4.8 0 L12.6 1 L9.4 3.6 Z" fill="#00ff00"/><path d="M9.4 3.6 L12.6 1 L12.1 9.5 L8.8 13.8Z" fill="#009c00"/><path d="M.3 2.6 L9.4 3.6 L8.8 13.8 L.8 11.5 Z" fill="#00d800"/></svg>
<span class="t" style="left:80.3px;top:594px;line-height:16px;font-size:13.9px;color:#000;letter-spacing:-0.362px;">Teapot.mesh</span>
<svg style="left:61.7px;top:614px" width="14" height="15" viewBox="0 0 14 15"><path d="M.3 2.6 L4.8 0 L12.6 1 L12.1 9.5 L8.8 13.8 L.8 11.5 Z" fill="#00e400"/><path d="M.3 2.6 L4.8 0 L12.6 1 L9.4 3.6 Z" fill="#00ff00"/><path d="M9.4 3.6 L12.6 1 L12.1 9.5 L8.8 13.8Z" fill="#009c00"/><path d="M.3 2.6 L9.4 3.6 L8.8 13.8 L.8 11.5 Z" fill="#00d800"/></svg>
<span class="t" style="left:80.3px;top:612px;line-height:16px;font-size:13.9px;color:#000;letter-spacing:-0.450px;">TriangleMesh.mesh</span>
<svg style="left:59px;top:630px" width="18" height="18" viewBox="0 0 18 18"><path d="M7.30 4.01 L8.86 4.45 L8.86 5.55 L7.30 5.99 L8.09 7.41 L7.31 8.19 L5.89 7.40 L5.45 8.96 L4.35 8.96 L3.91 7.40 L2.49 8.19 L1.71 7.41 L2.50 5.99 L0.94 5.55 L0.94 4.45 L2.50 4.01 L1.71 2.59 L2.49 1.81 L3.91 2.60 L4.35 1.04 L5.45 1.04 L5.89 2.60 L7.31 1.81 L8.09 2.59Z" fill="#0000ff"/><circle cx="4.9" cy="5" r="1.5" fill="#fff"/><path d="M15.10 11.40 L17.11 12.89 L16.49 14.38 L14.02 14.02 L14.38 16.49 L12.89 17.11 L11.40 15.10 L9.91 17.11 L8.42 16.49 L8.78 14.02 L6.31 14.38 L5.69 12.89 L7.70 11.40 L5.69 9.91 L6.31 8.42 L8.78 8.78 L8.42 6.31 L9.91 5.69 L11.40 7.70 L12.89 5.69 L14.38 6.31 L14.02 8.78 L16.49 8.42 L17.11 9.91Z" fill="#0000ff"/><circle cx="11.4" cy="11.4" r="2.7" fill="#fff"/><circle cx="11.4" cy="11.4" r="1.5" fill="#0000ff"/></svg>
<span class="t" style="left:80.3px;top:630px;line-height:16px;font-size:13.9px;color:#000;letter-spacing:-0.319px;">UniversalJoint.physics</span>
<svg style="left:25px;top:653px" width="11" height="11" viewBox="0 0 11 11"><defs><linearGradient id="eg" x1="0" y1="0" x2="0" y2="1"><stop offset=".45" stop-color="#fff"/><stop offset="1" stop-color="#d8d8d8"/></linearGradient></defs><rect x=".5" y=".5" width="10" height="10" rx="1.5" fill="url(#eg)" stroke="#8e8e8e"/><path d="M2.5 5.5 H8.5" stroke="#3a4e9c" stroke-width="1"/><path d="M5.5 2.5 V8.5" stroke="#3a4e9c" stroke-width="1"/></svg>
<svg style="left:43px;top:649px" width="13" height="15" viewBox="0 0 13 15"><rect x=".5" y=".5" width="11" height="14" fill="#ffe9a6" stroke="#f4cf63"/><rect x="10" y="8.5" width="2.5" height="6" fill="#fff1c4" stroke="#f0c54e"/></svg>
<span class="t" style="left:61.2px;top:648px;line-height:16px;font-size:13.9px;color:#000;letter-spacing:-0.343px;">ScrollingTexture</span>
<svg style="left:25px;top:671px" width="11" height="11" viewBox="0 0 11 11"><defs><linearGradient id="eg" x1="0" y1="0" x2="0" y2="1"><stop offset=".45" stop-color="#fff"/><stop offset="1" stop-color="#d8d8d8"/></linearGradient></defs><rect x=".5" y=".5" width="10" height="10" rx="1.5" fill="url(#eg)" stroke="#8e8e8e"/><path d="M2.5 5.5 H8.5" stroke="#3a4e9c" stroke-width="1"/><path d="M5.5 2.5 V8.5" stroke="#3a4e9c" stroke-width="1"/></svg>
<svg style="left:43px;top:667px" width="13" height="15" viewBox="0 0 13 15"><rect x=".5" y=".5" width="11" height="14" fill="#ffe9a6" stroke="#f4cf63"/><rect x="10" y="8.5" width="2.5" height="6" fill="#fff1c4" stroke="#f0c54e"/></svg>
<span class="t" style="left:61.2px;top:666px;line-height:16px;font-size:13.9px;color:#000;letter-spacing:-0.560px;">Video</span>
<svg style="left:6px;top:689px" width="11" height="11" viewBox="0 0 11 11"><defs><linearGradient id="eg" x1="0" y1="0" x2="0" y2="1"><stop offset=".45" stop-color="#fff"/><stop offset="1" stop-color="#d8d8d8"/></linearGradient></defs><rect x=".5" y=".5" width="10" height="10" rx="1.5" fill="url(#eg)" stroke="#8e8e8e"/><path d="M2.5 5.5 H8.5" stroke="#3a4e9c" stroke-width="1"/><path d="M5.5 2.5 V8.5" stroke="#3a4e9c" stroke-width="1"/></svg>
<svg style="left:24px;top:685px" width="13" height="15" viewBox="0 0 13 15"><rect x=".5" y=".5" width="11" height="14" fill="#ffe9a6" stroke="#f4cf63"/><rect x="10" y="8.5" width="2.5" height="6" fill="#fff1c4" stroke="#f0c54e"/></svg>
<span class="t" style="left:42.3px;top:684px;line-height:16px;font-size:13.9px;color:#000;letter-spacing:-0.546px;">Base</span>
<svg style="left:6px;top:707px" width="11" height="11" viewBox="0 0 11 11"><defs><linearGradient id="eg" x1="0" y1="0" x2="0" y2="1"><stop offset=".45" stop-color="#fff"/><stop offset="1" stop-color="#d8d8d8"/></linearGradient></defs><rect x=".5" y=".5" width="10" height="10" rx="1.5" fill="url(#eg)" stroke="#8e8e8e"/><path d="M2.5 5.5 H8.5" stroke="#3a4e9c" stroke-width="1"/><path d="M5.5 2.5 V8.5" stroke="#3a4e9c" stroke-width="1"/></svg>
<svg style="left:24px;top:703px" width="13" height="15" viewBox="0 0 13 15"><rect x=".5" y=".5" width="11" height="14" fill="#ffe9a6" stroke="#f4cf63"/><rect x="10" y="8.5" width="2.5" height="6" fill="#fff1c4" stroke="#f0c54e"/></svg>
<span class="t" style="left:42.3px;top:702px;line-height:16px;font-size:13.9px;color:#000;letter-spacing:-0.177px;">Effects</span>
<svg style="left:6px;top:725px" width="11" height="11" viewBox="0 0 11 11"><defs><linearGradient id="eg" x1="0" y1="0" x2="0" y2="1"><stop offset=".45" stop-color="#fff"/><stop offset="1" stop-color="#d8d8d8"/></linearGradient></defs><rect x=".5" y=".5" width="10" height="10" rx="1.5" fill="url(#eg)" stroke="#8e8e8e"/><path d="M2.5 5.5 H8.5" stroke="#3a4e9c" stroke-width="1"/><path d="M5.5 2.5 V8.5" stroke="#3a4e9c" stroke-width="1"/></svg>
<svg style="left:24px;top:721px" width="13" height="15" viewBox="0 0 13 15"><rect x=".5" y=".5" width="11" height="14" fill="#ffe9a6" stroke="#f4cf63"/><rect x="10" y="8.5" width="2.5" height="6" fill="#fff1c4" stroke="#f0c54e"/></svg>
<span class="t" style="left:42.3px;top:720px;line-height:16px;font-size:13.9px;color:#000;letter-spacing:-0.573px;">Fonts</span>
<svg style="left:6px;top:743px" width="11" height="11" viewBox="0 0 11 11"><defs><linearGradient id="eg" x1="0" y1="0" x2="0" y2="1"><stop offset=".45" stop-color="#fff"/><stop offset="1" stop-color="#d8d8d8"/></linearGradient></defs><rect x=".5" y=".5" width="10" height="10" rx="1.5" fill="url(#eg)" stroke="#8e8e8e"/><path d="M2.5 5.5 H8.5" stroke="#3a4e9c" stroke-width="1"/><path d="M5.5 2.5 V8.5" stroke="#3a4e9c" stroke-width="1"/></svg>
<svg style="left:24px;top:739px" width="13" height="15" viewBox="0 0 13 15"><rect x=".5" y=".5" width="11" height="14" fill="#ffe9a6" stroke="#f4cf63"/><rect x="10" y="8.5" width="2.5" height="6" fill="#fff1c4" stroke="#f0c54e"/></svg>
<span class="t" style="left:42.3px;top:738px;line-height:16px;font-size:13.9px;color:#000;letter-spacing:-1.104px;">GUI</span>
<svg style="left:6px;top:761px" width="11" height="11" viewBox="0 0 11 11"><defs><linearGradient id="eg" x1="0" y1="0" x2="0" y2="1"><stop offset=".45" stop-color="#fff"/><stop offset="1" stop-color="#d8d8d8"/></linearGradient></defs><rect x=".5" y=".5" width="10" height="10" rx="1.5" fill="url(#eg)" stroke="#8e8e8e"/><path d="M2.5 5.5 H8.5" stroke="#3a4e9c" stroke-width="1"/><path d="M5.5 2.5 V8.5" stroke="#3a4e9c" stroke-width="1"/></svg>
<svg style="left:24px;top:757px" width="13" height="15" viewBox="0 0 13 15"><rect x=".5" y=".5" width="11" height="14" fill="#ffe9a6" stroke="#f4cf63"/><rect x="10" y="8.5" width="2.5" height="6" fill="#fff1c4" stroke="#f0c54e"/></svg>
<span class="t" style="left:42.3px;top:756px;line-height:16px;font-size:13.9px;color:#000;letter-spacing:-0.777px;">Languages</span>
<svg style="left:6px;top:779px" width="11" height="11" viewBox="0 0 11 11"><defs><linearGradient id="eg" x1="0" y1="0" x2="0" y2="1"><stop offset=".45" stop-color="#fff"/><stop offset="1" stop-color="#d8d8d8"/></linearGradient></defs><rect x=".5" y=".5" width="10" height="10" rx="1.5" fill="url(#eg)" stroke="#8e8e8e"/><path d="M2.5 5.5 H8.5" stroke="#3a4e9c" stroke-width="1"/><path d="M5.5 2.5 V8.5" stroke="#3a4e9c" stroke-width="1"/></svg>
<svg style="left:24px;top:775px" width="13" height="15" viewBox="0 0 13 15"><rect x=".5" y=".5" width="11" height="14" fill="#ffe9a6" stroke="#f4cf63"/><rect x="10" y="8.5" width="2.5" height="6" fill="#fff1c4" stroke="#f0c54e"/></svg>
<span class="t" style="left:42.3px;top:774px;line-height:16px;font-size:13.9px;color:#000;letter-spacing:-0.748px;">Maps</span>
<svg style="left:6px;top:797px" width="11" height="11" viewBox="0 0 11 11"><defs><linearGradient id="eg" x1="0" y1="0" x2="0" y2="1"><stop offset=".45" stop-color="#fff"/><stop offset="1" stop-color="#d8d8d8"/></linearGradient></defs><rect x=".5" y=".5" width="10" height="10" rx="1.5" fill="url(#eg)" stroke="#8e8e8e"/><path d="M2.5 5.5 H8.5" stroke="#3a4e9c" stroke-width="1"/><path d="M5.5 2.5 V8.5" stroke="#3a4e9c" stroke-width="1"/></svg>
<svg style="left:24px;top:793px" width="13" height="15" viewBox="0 0 13 15"><rect x=".5" y=".5" width="11" height="14" fill="#ffe9a6" stroke="#f4cf63"/><rect x="10" y="8.5" width="2.5" height="6" fill="#fff1c4" stroke="#f0c54e"/></svg>
<span class="t" style="left:42.3px;top:792px;line-height:16px;font-size:13.9px;color:#000;letter-spacing:-0.635px;">Models</span>
<svg style="left:6px;top:815px" width="11" height="11" viewBox="0 0 11 11"><defs><linearGradient id="eg" x1="0" y1="0" x2="0" y2="1"><stop offset=".45" stop-color="#fff"/><stop offset="1" stop-color="#d8d8d8"/></linearGradient></defs><rect x=".5" y=".5" width="10" height="10" rx="1.5" fill="url(#eg)" stroke="#8e8e8e"/><path d="M2.5 5.5 H8.5" stroke="#3a4e9c" stroke-width="1"/><path d="M5.5 2.5 V8.5" stroke="#3a4e9c" stroke-width="1"/></svg>
<svg style="left:24px;top:811px" width="13" height="15" viewBox="0 0 13 15"><rect x=".5" y=".5" width="11" height="14" fill="#ffe9a6" stroke="#f4cf63"/><rect x="10" y="8.5" width="2.5" height="6" fill="#fff1c4" stroke="#f0c54e"/></svg>
<span class="t" style="left:42.3px;top:810px;line-height:16px;font-size:13.9px;color:#000;letter-spacing:-0.674px;">Sounds</span>
<svg style="left:6px;top:833px" width="11" height="11" viewBox="0 0 11 11"><defs><linearGradient id="eg" x1="0" y1="0" x2="0" y2="1"><stop offset=".45" stop-color="#fff"/><stop offset="1" stop-color="#d8d8d8"/></linearGradient></defs><rect x=".5" y=".5" width="10" height="10" rx="1.5" fill="url(#eg)" stroke="#8e8e8e"/><path d="M2.5 5.5 H8.5" stroke="#3a4e9c" stroke-width="1"/></svg>
<svg style="left:24px;top:829px" width="13" height="15" viewBox="0 0 13 15"><rect x=".5" y=".5" width="11" height="14" fill="#ffe9a6" stroke="#f4cf63"/><rect x="10" y="8.5" width="2.5" height="6" fill="#fff1c4" stroke="#f0c54e"/></svg>
<span class="t" style="left:42.3px;top:828px;line-height:16px;font-size:13.9px;color:#000;letter-spacing:-0.417px;">Types</span>
<svg style="left:43px;top:847px" width="13" height="15" viewBox="0 0 13 15"><rect x=".5" y=".5" width="11" height="14" fill="#ffe9a6" stroke="#f4cf63"/><rect x="10" y="8.5" width="2.5" height="6" fill="#fff1c4" stroke="#f0c54e"/></svg>
</div>
<div class="a" style="left:299px;top:131px;width:20px;height:849px;background:#f0f0f0"></div>
<div class="a" style="left:299px;top:152px;width:19px;height:344px;background:#c8c8c8"></div>
<svg style="left:303.6px;top:137.6px" width="10" height="8"><path d="M0.7 6.2 L4.8 1.5 L8.9 6.2" stroke="#505050" stroke-width="2" fill="none"/></svg>
<svg style="left:303.6px;top:965px" width="10" height="8"><path d="M0.7 0.8 L4.8 5.5 L8.9 0.8" stroke="#505050" stroke-width="2" fill="none"/></svg>
<div class="a" style="left:2px;top:980px;width:317px;height:20px;background:#f0f0f0"></div>
<div class="a" style="left:23px;top:980px;width:246px;height:19px;background:#c8c8c8"></div>
<svg style="left:7.8px;top:984.9px" width="8" height="10"><path d="M6.6 0.7 L1.6 4.6 L6.6 8.5" stroke="#505050" stroke-width="2" fill="none"/></svg>
<svg style="left:283.8px;top:984.9px" width="8" height="10"><path d="M0.8 0.7 L5.8 4.6 L0.8 8.5" stroke="#505050" stroke-width="2" fill="none"/></svg>
<div class="a" style="left:326px;top:106px;width:906px;height:895px;background:#00ff00"></div>
<div class="a" style="left:330px;top:110px;width:898px;height:887px;overflow:hidden;background:radial-gradient(ellipse 80% 75% at 62% 8%,rgba(255,255,255,.028) 0%,rgba(0,0,0,0) 45%,rgba(0,0,0,.09) 100%),linear-gradient(174deg,#42434b 0%,#3e3f46 18%,#36373d 42%,#2d2e33 66%,#27282c 88%,#26272b 100%)">
<svg style="left:0;top:0" width="898" height="887" viewBox="330 110 898 887">
<polygon points="366.6,401.7 1119.5,401.2 1118.5,412.0 369.7,421.2" fill="#555555" />
<line x1="366.6" y1="401.7" x2="675.0" y2="401.5" stroke="#636363" stroke-width="1.2" />
<line x1="724.0" y1="401.4" x2="1119.5" y2="401.2" stroke="#636363" stroke-width="1.2" />
<polygon points="654.4,315.8 677.2,304.5 762.6,310.8 764.0,496.8 689.1,503.0 663.3,491.7" fill="#555555" />
<polygon points="678.4,500.2 689.1,503.0 748.4,498.1 750.0,527.8 696.8,533.6 679.4,521.7" fill="#0000aa" />
<polygon points="678.4,500.2 689.1,503.0 696.8,533.6 679.4,521.7" fill="#00009c" />
<polygon points="669.5,684.0 676.0,679.0 682.0,682.0 681.0,699.0 671.0,697.0" fill="#860000" />
<polygon points="674.0,680.0 682.0,679.0 682.0,683.0 675.0,684.0" fill="#c80000" />
<polygon points="739.8,708.3 748.7,712.2 746.4,721.8 736.7,721.4 734.0,726.5 739.8,734.3 733.1,741.5 724.9,736.3 720.0,739.3 721.1,749.0 711.6,751.9 707.2,743.3 701.4,743.5 697.5,752.4 687.9,750.1 688.3,740.4 683.2,737.7 675.4,743.5 668.2,736.8 673.4,728.6 670.4,723.7 660.7,724.8 657.8,715.3 666.4,710.9 666.2,705.1 657.3,701.2 659.6,691.6 669.3,692.0 672.0,686.9 666.2,679.1 672.9,671.9 681.1,677.1 686.0,674.1 684.9,664.4 694.4,661.5 698.8,670.1 704.6,669.9 708.5,661.0 718.1,663.3 717.7,673.0 722.8,675.7 730.6,669.9 737.8,676.6 732.6,684.8 735.6,689.7 745.3,688.6 748.2,698.1 739.6,702.5" fill="#0000f0" />
<polygon points="741.8,710.3 750.7,714.2 748.4,723.8 738.7,723.4 736.0,728.5 741.8,736.3 735.1,743.5 726.9,738.3 722.0,741.3 723.1,751.0 713.6,753.9 709.2,745.3 703.4,745.5 699.5,754.4 689.9,752.1 690.3,742.4 685.2,739.7 677.4,745.5 670.2,738.8 675.4,730.6 672.4,725.7 662.7,726.8 659.8,717.3 668.4,712.9 668.2,707.1 659.3,703.2 661.6,693.6 671.3,694.0 674.0,688.9 668.2,681.1 674.9,673.9 683.1,679.1 688.0,676.1 686.9,666.4 696.4,663.5 700.8,672.1 706.6,671.9 710.5,663.0 720.1,665.3 719.7,675.0 724.8,677.7 732.6,671.9 739.8,678.6 734.6,686.8 737.6,691.7 747.3,690.6 750.2,700.1 741.6,704.5" fill="#0000c8" />
<polygon points="674.7,706.1 731.6,694.1 742.0,695.5 713.5,735.0 708.0,732.0" fill="#700000" />
<polygon points="674.7,706.1 731.6,694.1 735.0,698.5 683.0,711.0" fill="#8c0000" />
<polygon points="699.4,714.3 720.3,709.9 710.5,722.0" fill="#0000c0" />
<defs><linearGradient id="rod" x1="0" y1="0" x2="1" y2="0"><stop offset="0" stop-color="#8e0000"/><stop offset=".35" stop-color="#d40000"/><stop offset=".7" stop-color="#d00000"/><stop offset="1" stop-color="#a00000"/></linearGradient><linearGradient id="tube" x1="0" y1="0" x2="1" y2="0"><stop offset="0" stop-color="#0000b8"/><stop offset=".4" stop-color="#1010ff"/><stop offset="1" stop-color="#0000c0"/></linearGradient></defs>
<polygon points="710.1,535 716.7,535 709.8,763 702.4,763" fill="url(#rod)"/>
<line x1="712.3" y1="714.5" x2="723.5" y2="726.5" stroke="#0000ff" stroke-width="7.5" stroke-linecap="round"/>
<line x1="714.4" y1="712.6" x2="725.6" y2="724.6" stroke="#0000a4" stroke-width="1.7999999999999998" />
<line x1="711.5" y1="715.3" x2="722.7" y2="727.3" stroke="#2a2aff" stroke-width="2.25" />
<line x1="736.8" y1="691.5" x2="718.3" y2="779.0" stroke="#0000ff" stroke-width="8.4" stroke-linecap="round"/>
<line x1="739.9" y1="692.2" x2="721.4" y2="779.7" stroke="#0000a4" stroke-width="2.016" />
<line x1="735.6" y1="691.2" x2="717.1" y2="778.7" stroke="#2a2aff" stroke-width="2.52" />
<line x1="716.0" y1="670.4" x2="736.8" y2="691.0" stroke="#0000ff" stroke-width="8" stroke-linecap="round"/>
<line x1="718.1" y1="668.2" x2="738.9" y2="688.8" stroke="#0000a4" stroke-width="1.92" />
<line x1="715.2" y1="671.3" x2="736.0" y2="691.9" stroke="#2a2aff" stroke-width="2.4" />
<polygon points="816.5,684.1 824.9,686.0 824.5,695.3 815.9,696.3 814.8,700.4 821.4,706.2 816.8,714.3 808.8,711.0 805.9,714.1 809.2,722.4 801.6,727.3 796.0,720.5 792.1,721.8 791.3,730.8 782.4,731.5 780.5,722.7 776.4,722.0 771.8,729.5 763.6,725.8 765.7,717.1 762.4,714.4 755.0,718.9 749.4,711.6 755.2,704.9 753.4,701.0 744.8,701.2 743.1,692.0 751.2,688.9 751.4,684.6 743.7,680.7 746.3,671.7 754.8,672.9 756.9,669.2 751.8,661.9 758.0,655.2 765.0,660.4 768.5,658.2 767.2,649.3 775.7,646.4 779.6,654.4 783.7,654.1 786.5,645.6 795.3,647.2 795.2,656.2 799.0,657.9 805.3,651.7 812.3,657.4 808.3,665.4 810.8,668.7 819.1,666.3 822.9,674.8 815.7,679.8" fill="#00e400" />
<polygon points="819.0,685.6 827.4,687.5 827.0,696.8 818.4,697.8 817.3,701.9 823.9,707.7 819.3,715.8 811.3,712.5 808.4,715.6 811.7,723.9 804.1,728.8 798.5,722.0 794.6,723.3 793.8,732.3 784.9,733.0 783.0,724.2 778.9,723.5 774.3,731.0 766.1,727.3 768.2,718.6 764.9,715.9 757.5,720.4 751.9,713.1 757.7,706.4 755.9,702.5 747.3,702.7 745.6,693.5 753.7,690.4 753.9,686.1 746.2,682.2 748.8,673.2 757.3,674.4 759.4,670.7 754.3,663.4 760.5,656.7 767.5,661.9 771.0,659.7 769.7,650.8 778.2,647.9 782.1,655.9 786.2,655.6 789.0,647.1 797.8,648.7 797.7,657.7 801.5,659.4 807.8,653.2 814.8,658.9 810.8,666.9 813.3,670.2 821.6,667.8 825.4,676.3 818.2,681.3" fill="#00b800" />
<ellipse cx="786.5" cy="690" rx="31" ry="33" fill="#00b000"/>
<polygon points="742.4,670.7 838.5,764.6 845.5,757.4 749.4,663.5" fill="#786800" />
<polygon points="749.4,663.5 845.5,757.4 842.7,760.3 746.6,666.4" fill="#8c7b08" />
<polygon points="838.0,757.0 845.0,757.0 846.0,763.0 841.0,766.0" fill="#6c5e00" />
<polygon points="764.7,691.1 816.0,678.5 814.0,670.3 762.7,682.9" fill="#786800" />
<polygon points="762.7,682.9 814.0,670.3 814.8,673.6 763.5,686.2" fill="#8c7b08" />
<polygon points="811.4,672.1 790.4,704.7 797.6,709.3 818.6,676.7" fill="#786800" />
<polygon points="811.4,672.1 790.4,704.7 793.3,706.5 814.3,673.9" fill="#8c7b08" />
<line x1="789.0" y1="697.0" x2="797.0" y2="700.0" stroke="#20ff30" stroke-width="7" stroke-linecap="round"/>
<polygon points="806.0,650.0 813.0,648.0 836.0,659.0 832.0,667.0" fill="#000078" />
<polygon points="882.3,671.2 889.2,674.3 887.5,683.5 880.2,683.3 878.5,687.2 883.1,693.8 877.6,700.8 871.3,696.4 868.1,698.8 869.3,707.2 861.4,710.2 857.9,702.7 854.1,703.0 851.4,710.9 843.3,709.0 843.6,700.6 840.1,698.6 834.4,703.9 828.2,697.6 832.1,690.5 830.0,686.8 822.7,688.1 820.0,679.2 826.5,675.1 826.3,670.8 819.4,667.7 821.1,658.5 828.4,658.7 830.1,654.8 825.5,648.2 831.0,641.2 837.3,645.6 840.5,643.2 839.3,634.8 847.2,631.8 850.7,639.3 854.5,639.0 857.2,631.1 865.3,633.0 865.0,641.4 868.5,643.4 874.2,638.1 880.4,644.4 876.5,651.5 878.6,655.2 885.9,653.9 888.6,662.8 882.1,666.9" fill="#ececec" />
<polygon points="884.5,673.2 891.4,676.3 889.7,685.5 882.4,685.3 880.7,689.2 885.3,695.8 879.8,702.8 873.5,698.4 870.3,700.8 871.5,709.2 863.6,712.2 860.1,704.7 856.3,705.0 853.6,712.9 845.5,711.0 845.8,702.6 842.3,700.6 836.6,705.9 830.4,699.6 834.3,692.5 832.2,688.8 824.9,690.1 822.2,681.2 828.7,677.1 828.5,672.8 821.6,669.7 823.3,660.5 830.6,660.7 832.3,656.8 827.7,650.2 833.2,643.2 839.5,647.6 842.7,645.2 841.5,636.8 849.4,633.8 852.9,641.3 856.7,641.0 859.4,633.1 867.5,635.0 867.2,643.4 870.7,645.4 876.4,640.1 882.6,646.4 878.7,653.5 880.8,657.2 888.1,655.9 890.8,664.8 884.3,668.9" fill="#b2b2b2" />
<line x1="828.0" y1="672.0" x2="858.5" y2="646.5" stroke="#f4f4f4" stroke-width="0.8" stroke-dasharray="5 2"/>
<polygon points="938.0,680.1 943.5,682.7 942.8,693.2 937.1,694.1 936.0,698.7 939.9,705.3 936.0,713.9 930.8,710.1 928.4,713.2 929.7,722.1 923.6,726.4 920.3,719.0 917.2,719.8 915.5,728.5 908.8,727.4 908.3,718.4 905.4,716.6 901.2,722.9 895.7,716.7 898.2,708.4 896.2,704.6 890.6,706.7 887.8,697.0 892.5,691.8 892.0,686.9 886.5,684.3 887.2,673.8 892.9,672.9 894.0,668.3 890.1,661.7 894.0,653.1 899.2,656.9 901.6,653.8 900.3,644.9 906.4,640.6 909.7,648.0 912.8,647.2 914.5,638.5 921.2,639.6 921.7,648.6 924.6,650.4 928.8,644.1 934.3,650.3 931.8,658.6 933.8,662.4 939.4,660.3 942.2,670.0 937.5,675.2" fill="#ee0000" />
<polygon points="941.0,680.6 946.5,683.2 945.8,693.7 940.1,694.6 939.0,699.2 942.9,705.8 939.0,714.4 933.8,710.6 931.4,713.7 932.7,722.6 926.6,726.9 923.3,719.5 920.2,720.3 918.5,729.0 911.8,727.9 911.3,718.9 908.4,717.1 904.2,723.4 898.7,717.2 901.2,708.9 899.2,705.1 893.6,707.2 890.8,697.5 895.5,692.3 895.0,687.4 889.5,684.8 890.2,674.3 895.9,673.4 897.0,668.8 893.1,662.2 897.0,653.6 902.2,657.4 904.6,654.3 903.3,645.4 909.4,641.1 912.7,648.5 915.8,647.7 917.5,639.0 924.2,640.1 924.7,649.1 927.6,650.9 931.8,644.6 937.3,650.8 934.8,659.1 936.8,662.9 942.4,660.8 945.2,670.5 940.5,675.7" fill="#c00000" />
<polygon points="832.7,726.1 971.7,689.4 969.3,680.2 830.3,716.9" fill="#005c00" />
<polygon points="830.3,716.9 969.3,680.2 970.3,683.9 831.3,720.6" fill="#007400" />
<polygon points="887.1,666.9 926.6,690.6 931.4,682.4 891.9,658.7" fill="#005c00" />
<polygon points="891.9,658.7 931.4,682.4 929.5,685.7 890.0,662.0" fill="#007400" />
<polygon points="832.6,670.5 911.1,738.0 917.9,730.0 839.4,662.5" fill="#000074" />
<polygon points="839.4,662.5 917.9,730.0 915.2,733.2 836.7,665.7" fill="#000092" />
<polygon points="838.1,672.4 885.5,662.4 883.3,651.6 835.9,661.6" fill="#000074" />
<polygon points="835.9,661.6 883.3,651.6 884.2,655.9 836.8,665.9" fill="#000092" />
<polygon points="879.4,655.4 864.5,688.8 874.5,693.2 889.4,659.8" fill="#000074" />
<polygon points="879.4,655.4 864.5,688.8 868.5,690.6 883.4,657.2" fill="#000092" />
<polygon points="910.5,737.5 917.5,730.0 920.5,733.5 914.0,741.0" fill="#00005c" />
<line x1="862.0" y1="680.0" x2="872.0" y2="684.0" stroke="#e8e8e8" stroke-width="7" stroke-linecap="round"/>
<path d="M952 674 L1014 669 L1013.5 706 L978 721 L950.6 700 Z" fill="#675b00"/>
<path d="M950.6 700 L978 721 L1013.5 706 L1013.5 709 L978 724 L950.6 703Z" fill="#574c00"/>
<ellipse cx="985" cy="667.5" rx="22.7" ry="21" fill="#716400"/>
<ellipse cx="988" cy="661" rx="14" ry="11" fill="#7d6e02" opacity=".6"/>
<line x1="948.0" y1="644.0" x2="986.4" y2="634.4" stroke="#00ff20" stroke-width="0.9" />
<line x1="986.4" y1="634.4" x2="1023.8" y2="648.7" stroke="#00ff20" stroke-width="0.9" />
<line x1="1023.8" y1="648.7" x2="984.7" y2="660.0" stroke="#00ff20" stroke-width="0.9" />
<line x1="984.7" y1="660.0" x2="948.0" y2="644.0" stroke="#00ff20" stroke-width="0.9" />
<line x1="949.0" y1="704.0" x2="976.2" y2="725.0" stroke="#00ff20" stroke-width="0.9" />
<line x1="976.2" y1="725.0" x2="1017.0" y2="713.5" stroke="#00ff20" stroke-width="0.9" />
<line x1="948.0" y1="644.0" x2="949.0" y2="704.0" stroke="#00ff20" stroke-width="0.9" />
<line x1="984.7" y1="660.0" x2="976.2" y2="725.0" stroke="#00ff20" stroke-width="0.9" />
<line x1="1023.8" y1="648.7" x2="1017.0" y2="713.5" stroke="#00ff20" stroke-width="0.9" />
<line x1="986.4" y1="634.4" x2="987.0" y2="694.0" stroke="#00ff20" stroke-width="0.9" />
<line x1="949.0" y1="704.0" x2="987.0" y2="694.0" stroke="#00ff20" stroke-width="0.9" />
<line x1="987.0" y1="694.0" x2="1017.0" y2="713.5" stroke="#00ff20" stroke-width="0.9" />
<line x1="933.1" y1="609.0" x2="928.7" y2="683.7" stroke="#ff0000" stroke-width="3.2" stroke-linecap="round"/>
<line x1="928.7" y1="683.7" x2="984.7" y2="712.5" stroke="#ff0000" stroke-width="3.2" stroke-linecap="round"/>
<line x1="933.1" y1="609.0" x2="989.8" y2="598.8" stroke="#0000ff" stroke-width="3.2" stroke-linecap="round"/>
<line x1="989.8" y1="598.8" x2="1050.9" y2="620.9" stroke="#0000ff" stroke-width="3.2" stroke-linecap="round"/>
<line x1="1050.9" y1="620.9" x2="1042.4" y2="695.5" stroke="#00ff00" stroke-width="3.2" stroke-linecap="round"/>
<line x1="1042.4" y1="695.5" x2="984.7" y2="712.5" stroke="#00ff00" stroke-width="3.2" stroke-linecap="round"/>
<line x1="986.8" y1="637.8" x2="994.0" y2="562.0" stroke="#0000ff" stroke-width="3.4" />
<polygon points="997.2,527.4 988.3,563.0 1000.0,564.0" fill="#0000ff" />
<line x1="1006.8" y1="676.9" x2="1078.0" y2="714.0" stroke="#00ff00" stroke-width="3.2" />
<polygon points="1113.7,732.9 1076.0,722.0 1082.0,707.0" fill="#00ff00" />
<line x1="987.0" y1="668.5" x2="900.0" y2="685.5" stroke="#ff0000" stroke-width="3.2" />
<polygon points="870.7,693.7 896.5,680.6 900.0,693.2" fill="#ff0000" />
<line x1="926.0" y1="679.4" x2="985.0" y2="666.0" stroke="#ff0000" stroke-width="1" />
<polygon points="991.0,664.7 983.0,664.0 984.0,668.5" fill="#ff0000" />
<line x1="665.0" y1="529.5" x2="758.7" y2="520.6" stroke="#ff0000" stroke-width="1" />
<polygon points="665.0,529.8 678.0,526.3 678.3,530.8" fill="#ff0000" />
<polygon points="758.7,520.6 750.0,520.0 750.3,522.6" fill="#ff0000" />
<line x1="697.3" y1="516.5" x2="731.6" y2="535.0" stroke="#00ff00" stroke-width="1" />
<line x1="723.5" y1="531.0" x2="730.0" y2="534.5" stroke="#00ff00" stroke-width="4.5" stroke-linecap="round"/>
<g fill="none" stroke="#ffd800" stroke-width="0.9"><circle cx="713.5" cy="525" r="9.2"/><ellipse cx="713.5" cy="525" rx="4.1" ry="9.2"/><ellipse cx="713.5" cy="525" rx="9.2" ry="3.2"/><line x1="713.5" y1="515.8" x2="713.5" y2="534.2"/></g>
<line x1="657.8" y1="778.2" x2="751.1" y2="752.6" stroke="#ff0000" stroke-width="1" />
<polygon points="657.8,778.2 669.0,772.5 670.0,777.0" fill="#ff0000" />
<line x1="690.3" y1="739.4" x2="723.4" y2="792.9" stroke="#00ff00" stroke-width="1" />
<polygon points="723.4,792.9 717.0,783.5 721.5,781.5" fill="#00ff00" />
<line x1="690.3" y1="739.4" x2="706.0" y2="765.0" stroke="#0044ff" stroke-width="1" />
<g fill="none" stroke="#ffd800" stroke-width="0.9"><circle cx="705.7" cy="765" r="9.5"/><ellipse cx="705.7" cy="765" rx="4.3" ry="9.5"/><ellipse cx="705.7" cy="765" rx="9.5" ry="3.3"/><line x1="705.7" y1="755.5" x2="705.7" y2="774.5"/></g>
<g fill="none" stroke="#ff2a00" stroke-width="0.9"><circle cx="956" cy="662" r="8"/><ellipse cx="956" cy="662" rx="3.6" ry="8"/><ellipse cx="956" cy="662" rx="8" ry="2.8"/><line x1="956" y1="654" x2="956" y2="670"/></g>
<g fill="none" stroke="#ffd800" stroke-width="0.9"><circle cx="955.2" cy="673" r="8.5"/><ellipse cx="955.2" cy="673" rx="3.8" ry="8.5"/><ellipse cx="955.2" cy="673" rx="8.5" ry="3.0"/><line x1="955.2" y1="664.5" x2="955.2" y2="681.5"/></g>
<text x="861" y="683" font-family="Liberation Sans" font-size="15" fill="#ff1010">x</text>
<text x="992.8" y="516.8" font-family="Liberation Sans" font-size="19.5" fill="#1a1aff" textLength="10.8" lengthAdjust="spacingAndGlyphs">z</text>
<text x="1110" y="723" font-family="Liberation Sans" font-size="19" fill="#00ee00" textLength="11" lengthAdjust="spacingAndGlyphs">y</text>
</svg>
<span class="t" style="left:15px;top:15px;line-height:22px;font-size:20px;color:#ffff00;transform-origin:0 0;transform:scaleX(1.1742);text-shadow:1px 1px 0 #111,1px 0 0 #222">Selected: 1</span>
<span class="t" style="left:15px;top:38px;line-height:22px;font-size:20px;color:#ffffff;transform-origin:0 0;transform:scaleX(1.1876);text-shadow:1px 1px 0 #111,1px 0 0 #222">Body: body11</span>
<span class="t" style="left:15px;top:71px;line-height:22px;font-size:20px;color:#ffffff;transform-origin:0 0;transform:scaleX(1.1972);text-shadow:1px 1px 0 #111,1px 0 0 #222">Total mass of selected bodies: 0.00</span>
</div>
<span class="t" style="left:1244.3px;top:110px;line-height:17px;font-size:15.2px;color:#6d6d6d;letter-spacing:-0.248px;">Properties</span>
<svg style="left:1317px;top:115px" width="204" height="6"><defs><pattern id="gp2" width="4" height="4" patternUnits="userSpaceOnUse"><rect x="0" y="0" width="1" height="1" fill="#b4b4b4"/><rect x="2" y="2" width="1" height="1" fill="#b4b4b4"/></pattern></defs><rect width="204" height="5" fill="url(#gp2)"/></svg>
<svg style="left:1531px;top:109px" width="9" height="12" viewBox="0 0 9 12"><path d="M2.5 0.5 H6.5 M2.5 0.5 V6.5 M5.5 0.5 V6.5 M6.5 0.5 V6.5 M0.5 6.5 H8.5 M4.5 6.5 V11" stroke="#555" stroke-width="1" fill="none" shape-rendering="crispEdges"/></svg>
<svg style="left:1548px;top:111px" width="10" height="9" viewBox="0 0 10 9"><path d="M0.7 0.5 L9.3 8.5 M9.3 0.5 L0.7 8.5" stroke="#555" stroke-width="1.3" fill="none"/></svg>
<div class="a" style="left:1240px;top:132px;width:23px;height:21px;box-sizing:border-box;background:#cce4f7;border:1px solid #a5d0f3"></div>
<svg style="left:1242px;top:134px" width="20" height="18" viewBox="0 0 20 18">
<rect x="1.5" y="1.5" width="5.6" height="5.8" rx="1.2" fill="#fff" stroke="#6f9fd2"/><path d="M2.8 4.4 H5.8 M4.3 2.9 V5.9" stroke="#000" stroke-width="1.1"/>
<rect x="1.5" y="10.6" width="5.6" height="5.8" rx="1.2" fill="#fff" stroke="#6f9fd2"/><path d="M2.8 13.5 H5.8 M4.3 12 V15" stroke="#000" stroke-width="1.1"/>
<path d="M9.1 3.4 H13 M9.1 14.4 H13" stroke="#3a3a3a" stroke-width="1"/>
<path d="M9.1 5.4 H13 M9.1 7.4 H13 M9.1 9.4 H13 M9.1 11.4 H13 M9.1 16.5 H13" stroke="#6f9a8c" stroke-width="1"/>
<path d="M14 5.4 H17.1 M14 7.4 H17.1 M14 9.4 H17.1 M14 11.4 H17.1 M14 16.5 H17.1" stroke="#7d90a8" stroke-width="1"/>
</svg>
<span class="t" style="left:1266px;top:133.5px;font-family:'Liberation Serif',serif;font-weight:700;font-size:10px;color:#2a3fb0;line-height:1">A</span>
<span class="t" style="left:1266.5px;top:142px;font-family:'Liberation Serif',serif;font-weight:700;font-size:10px;color:#8e2030;line-height:1">Z</span>
<svg style="left:1274px;top:134px" width="8" height="18" viewBox="0 0 8 18"><path d="M4.5 1 V13" stroke="#000" stroke-width="1.1"/><path d="M2.2 11.2 L4.5 15.6 L6.8 11.2Z" fill="#000"/></svg>
<div class="a" style="left:1288px;top:133px;width:1px;height:21px;background:#7a7a7a"></div>
<svg style="left:1295px;top:135px" width="17" height="15" viewBox="0 0 17 15"><rect x=".5" y=".5" width="15" height="14" fill="#d9d9d9" stroke="#b0b0b0"/><rect x=".5" y=".5" width="15" height="2.4" fill="#b4b4b4"/>
<path d="M3 8 V5.5 H6.5 L7.3 6.5 H12.5 V8" fill="none" stroke="#b9b9b9"/><rect x="3" y="8" width="10" height="4" fill="#e4e4e4" stroke="#b9b9b9"/><path d="M4.5 10 H5.5 M6.5 10 H10" stroke="#aaa"/></svg>
<svg style="left:1318px;top:135px" width="16" height="16" viewBox="0 0 16 16"><circle cx="8" cy="8" r="7.8" fill="#b3b3b3"/><text x="8" y="12.7" font-family="Liberation Sans" font-weight="700" font-size="13" text-anchor="middle" fill="#eeeeee">?</text></svg>
<div class="a" style="left:1238px;top:156px;width:325px;height:668px;box-sizing:border-box;border:1px solid #a0a0a0;background:#fff"></div>
<div class="a" style="left:1239px;top:157px;width:323px;height:433px;background:#f0f4fa"></div>
<div class="a" style="left:1239px;top:157px;width:323px;height:666px;overflow:hidden">
<svg style="left:5px;top:6px" width="10" height="6" viewBox="0 0 10 6"><path d="M.8 1 L4.8 4.8 L8.8 1" stroke="#3c3c3c" stroke-width="1.4" fill="none"/></svg>
<span class="t" style="left:25.5px;top:2px;line-height:16px;font-size:14px;font-weight:700;color:#000;letter-spacing:0.347px;">_General</span>
<div class="a" style="left:21px;top:19px;width:123px;height:17px;background:#fff;overflow:hidden"><span class="t" style="left:4.3px;top:1px;line-height:16px;font-size:13.9px;color:#000;letter-spacing:-1.038px;">CCD</span></div>
<div class="a" style="left:145px;top:19px;width:178px;height:17px;background:#fff;overflow:hidden">
<span class="t" style="left:3.5px;top:1px;line-height:16px;font-size:13.9px;color:#000;letter-spacing:-0.098px;">False</span>
</div>
<div class="a" style="left:21px;top:37px;width:123px;height:17px;background:#fff;overflow:hidden"><span class="t" style="left:4.3px;top:1px;line-height:16px;font-size:13.9px;color:#000;letter-spacing:-0.223px;">EnableGravity</span></div>
<div class="a" style="left:145px;top:37px;width:178px;height:17px;background:#fff;overflow:hidden">
<span class="t" style="left:3.5px;top:1px;line-height:16px;font-size:13.9px;color:#000;letter-spacing:-0.266px;">True</span>
</div>
<div class="a" style="left:21px;top:55px;width:123px;height:17px;background:#eef1f7;overflow:hidden"><span class="t" style="left:4.3px;top:1px;line-height:16px;font-size:13.9px;color:#000;letter-spacing:-0.145px;">Name</span></div>
<div class="a" style="left:145px;top:55px;width:178px;height:17px;background:#fff;overflow:hidden">
<span class="t" style="left:3.5px;top:1px;line-height:16px;font-size:13.9px;font-weight:700;color:#000;">body11</span>
</div>
<div class="a" style="left:21px;top:73px;width:123px;height:17px;background:#fff;overflow:hidden"><span class="t" style="left:4.3px;top:1px;line-height:16px;font-size:13.9px;color:#000;letter-spacing:-0.191px;">Shapes</span></div>
<div class="a" style="left:145px;top:73px;width:178px;height:17px;background:#fff;overflow:hidden">
<span class="t" style="left:3.5px;top:1px;line-height:16px;font-size:13.9px;color:#000;letter-spacing:-0.316px;">(Collection)</span>
</div>
<svg style="left:8px;top:76px" width="6" height="10" viewBox="0 0 6 10"><path d="M.8 .8 L4.8 5 L.8 9.2" stroke="#a6a6a6" stroke-width="1.3" fill="none"/></svg>
<div class="a" style="left:21px;top:91px;width:123px;height:17px;background:#fff;overflow:hidden"><span class="t" style="left:4.3px;top:1px;line-height:16px;font-size:13.9px;color:#000;letter-spacing:-0.050px;">Sleepiness</span></div>
<div class="a" style="left:145px;top:91px;width:178px;height:17px;background:#fff;overflow:hidden">
<span class="t" style="left:3.5px;top:1px;line-height:16px;font-size:13.9px;color:#000;letter-spacing:-0.774px;">0.5</span>
</div>
<div class="a" style="left:21px;top:109px;width:123px;height:17px;background:#fff;overflow:hidden"><span class="t" style="left:4.3px;top:1px;line-height:16px;font-size:13.9px;color:#000;letter-spacing:-0.461px;">Static</span></div>
<div class="a" style="left:145px;top:109px;width:178px;height:17px;background:#fff;overflow:hidden">
<span class="t" style="left:3.5px;top:1px;line-height:16px;font-size:13.9px;font-weight:700;color:#000;">True</span>
</div>
<svg style="left:5px;top:132px" width="10" height="6" viewBox="0 0 10 6"><path d="M.8 1 L4.8 4.8 L8.8 1" stroke="#3c3c3c" stroke-width="1.4" fill="none"/></svg>
<span class="t" style="left:25.5px;top:128px;line-height:16px;font-size:14px;font-weight:700;color:#000;letter-spacing:0.301px;">Damping</span>
<div class="a" style="left:21px;top:145px;width:123px;height:17px;background:#fff;overflow:hidden"><span class="t" style="left:4.3px;top:1px;line-height:16px;font-size:13.9px;color:#000;letter-spacing:-0.217px;">AngularDamping</span></div>
<div class="a" style="left:145px;top:145px;width:178px;height:17px;background:#fff;overflow:hidden">
<span class="t" style="left:3.5px;top:1px;line-height:16px;font-size:13.9px;color:#000;letter-spacing:-0.888px;">0.15</span>
</div>
<div class="a" style="left:21px;top:163px;width:123px;height:17px;background:#fff;overflow:hidden"><span class="t" style="left:4.3px;top:1px;line-height:16px;font-size:13.9px;color:#000;letter-spacing:-0.213px;">LinearDamping</span></div>
<div class="a" style="left:145px;top:163px;width:178px;height:17px;background:#fff;overflow:hidden">
<span class="t" style="left:3.5px;top:1px;line-height:16px;font-size:13.9px;color:#000;letter-spacing:-0.888px;">0.15</span>
</div>
<svg style="left:5px;top:186px" width="10" height="6" viewBox="0 0 10 6"><path d="M.8 1 L4.8 4.8 L8.8 1" stroke="#3c3c3c" stroke-width="1.4" fill="none"/></svg>
<span class="t" style="left:25.5px;top:182px;line-height:16px;font-size:14px;font-weight:700;color:#000;letter-spacing:0.545px;">Mass</span>
<div class="a" style="left:21px;top:199px;width:123px;height:17px;background:#fff;overflow:hidden"><span class="t" style="left:4.3px;top:1px;line-height:16px;font-size:13.9px;color:#000;letter-spacing:-0.419px;">CenterOfMassAuto</span></div>
<div class="a" style="left:145px;top:199px;width:178px;height:17px;background:#fff;overflow:hidden">
<span class="t" style="left:3.5px;top:1px;line-height:16px;font-size:13.9px;color:#000;letter-spacing:-0.266px;">True</span>
</div>
<div class="a" style="left:21px;top:217px;width:123px;height:17px;background:#fff;overflow:hidden"><span class="t" style="left:4.3px;top:1px;line-height:16px;font-size:13.9px;color:#000;letter-spacing:-0.302px;">Mass</span></div>
<div class="a" style="left:145px;top:217px;width:178px;height:17px;background:#fff;overflow:hidden">
<span class="t" style="left:3.5px;top:1px;line-height:16px;font-size:13.9px;font-weight:700;color:#000;">0</span>
</div>
<div class="a" style="left:21px;top:235px;width:123px;height:17px;background:#fff;overflow:hidden"><span class="t" style="left:4.3px;top:1px;line-height:16px;font-size:13.9px;color:#000;letter-spacing:-0.257px;">MassMethod</span></div>
<div class="a" style="left:145px;top:235px;width:178px;height:17px;background:#fff;overflow:hidden">
<span class="t" style="left:3.5px;top:1px;line-height:16px;font-size:13.9px;color:#000;letter-spacing:-0.262px;">By density</span>
</div>
<svg style="left:5px;top:258px" width="10" height="6" viewBox="0 0 10 6"><path d="M.8 1 L4.8 4.8 L8.8 1" stroke="#3c3c3c" stroke-width="1.4" fill="none"/></svg>
<span class="t" style="left:25.5px;top:254px;line-height:16px;font-size:14px;font-weight:700;color:#000;letter-spacing:0.040px;">PhysX</span>
<div class="a" style="left:21px;top:271px;width:123px;height:17px;background:#fff;overflow:hidden"><span class="t" style="left:4.3px;top:1px;line-height:16px;font-size:13.9px;color:#000;letter-spacing:-0.429px;">PhysX_Kinematic</span></div>
<div class="a" style="left:145px;top:271px;width:178px;height:17px;background:#fff;overflow:hidden">
<span class="t" style="left:3.5px;top:1px;line-height:16px;font-size:13.9px;color:#000;letter-spacing:-0.098px;">False</span>
</div>
<div class="a" style="left:21px;top:289px;width:123px;height:17px;background:#fff;overflow:hidden"><span class="t" style="left:4.3px;top:1px;line-height:16px;font-size:13.9px;color:#000;letter-spacing:-0.239px;">PhysX_SolverPositi</span></div>
<div class="a" style="left:145px;top:289px;width:178px;height:17px;background:#fff;overflow:hidden">
<span class="t" style="left:3.5px;top:1px;line-height:16px;font-size:13.9px;color:#000;">4</span>
</div>
<div class="a" style="left:21px;top:307px;width:123px;height:17px;background:#fff;overflow:hidden"><span class="t" style="left:4.3px;top:1px;line-height:16px;font-size:13.9px;color:#000;letter-spacing:-0.195px;">PhysX_SolverVeloc</span></div>
<div class="a" style="left:145px;top:307px;width:178px;height:17px;background:#fff;overflow:hidden">
<span class="t" style="left:3.5px;top:1px;line-height:16px;font-size:13.9px;color:#000;">1</span>
</div>
<svg style="left:5px;top:330px" width="10" height="6" viewBox="0 0 10 6"><path d="M.8 1 L4.8 4.8 L8.8 1" stroke="#3c3c3c" stroke-width="1.4" fill="none"/></svg>
<span class="t" style="left:25.5px;top:326px;line-height:16px;font-size:14px;font-weight:700;color:#000;letter-spacing:0.115px;">Transform</span>
<div class="a" style="left:21px;top:343px;width:123px;height:17px;background:#fff;overflow:hidden"><span class="t" style="left:4.3px;top:1px;line-height:16px;font-size:13.9px;color:#000;letter-spacing:-0.366px;">CenterOfMassPositi</span></div>
<div class="a" style="left:145px;top:343px;width:178px;height:17px;background:#fff;overflow:hidden">
<span class="t" style="left:3.5px;top:1px;line-height:16px;font-size:13.9px;color:#000;letter-spacing:-0.883px;">0 0 0</span>
</div>
<div class="a" style="left:21px;top:361px;width:123px;height:17px;background:#fff;overflow:hidden"><span class="t" style="left:4.3px;top:1px;line-height:16px;font-size:13.9px;color:#000;letter-spacing:-0.343px;">CenterOfMassRotat</span></div>
<div class="a" style="left:145px;top:361px;width:178px;height:17px;background:#fff;overflow:hidden">
<span class="t" style="left:3.5px;top:1px;line-height:16px;font-size:13.9px;color:#000;letter-spacing:-0.883px;">0 0 0</span>
</div>
<div class="a" style="left:21px;top:379px;width:123px;height:17px;background:#fff;overflow:hidden"><span class="t" style="left:4.3px;top:1px;line-height:16px;font-size:13.9px;color:#000;letter-spacing:-0.171px;">InertiaTensorFactor</span></div>
<div class="a" style="left:145px;top:379px;width:178px;height:17px;background:#fff;overflow:hidden">
<span class="t" style="left:3.5px;top:1px;line-height:16px;font-size:13.9px;color:#000;letter-spacing:-1.183px;">1 1 1</span>
</div>
<div class="a" style="left:21px;top:397px;width:123px;height:17px;background:#fff;overflow:hidden"><span class="t" style="left:4.3px;top:1px;line-height:16px;font-size:13.9px;color:#000;letter-spacing:-0.244px;">Position</span></div>
<div class="a" style="left:145px;top:397px;width:178px;height:17px;background:#fff;overflow:hidden">
<span class="t" style="left:3.5px;top:1px;line-height:16px;font-size:13.9px;font-weight:700;color:#000;letter-spacing:0.367px;">-4.903475 0.9385304 0.019</span>
</div>
<div class="a" style="left:21px;top:415px;width:123px;height:17px;background:#fff;overflow:hidden"><span class="t" style="left:4.3px;top:1px;line-height:16px;font-size:13.9px;color:#000;letter-spacing:-0.284px;">Rotation</span></div>
<div class="a" style="left:145px;top:415px;width:178px;height:17px;background:#fff;overflow:hidden">
<span class="t" style="left:3.5px;top:1px;line-height:16px;font-size:13.9px;color:#000;letter-spacing:-0.883px;">0 0 0</span>
</div>
</div>
<div class="a" style="left:1238px;top:827px;width:325px;height:59px;box-sizing:border-box;border:1px solid #a0a0a0;background:#f0f0f0"></div>
<span class="t" style="left:1244px;top:830px;line-height:16px;font-size:14px;font-weight:700;color:#000;letter-spacing:0.717px;">Name</span>
<span class="t" style="left:1244px;top:847px;line-height:16px;font-size:13.9px;color:#000;letter-spacing:-0.238px;">Name of the body.</span>
<div class="a" style="left:1246px;top:898px;width:140px;height:32px;box-sizing:border-box;border:1px solid #adadad;background:#fdfdfd"></div>
<span class="t" style="left:1303px;top:906px;line-height:16px;font-size:13.9px;color:#000;letter-spacing:0.377px;">Test</span>
<div class="a" style="left:1246px;top:940px;width:16px;height:16px;box-sizing:border-box;border:1px solid #9c9c9c;background:#fdfdfd"></div>
<span class="t" style="left:1266.2px;top:939px;line-height:16px;font-size:13.9px;color:#000;letter-spacing:-0.422px;">Show Contacts</span>
<div class="a" style="left:1246px;top:966px;width:16px;height:16px;box-sizing:border-box;border:1px solid #9c9c9c;background:#fdfdfd"></div>
<span class="t" style="left:1266.2px;top:965px;line-height:16px;font-size:13.9px;color:#000;letter-spacing:-0.195px;">Wireframe mode</span>
</body></html>
